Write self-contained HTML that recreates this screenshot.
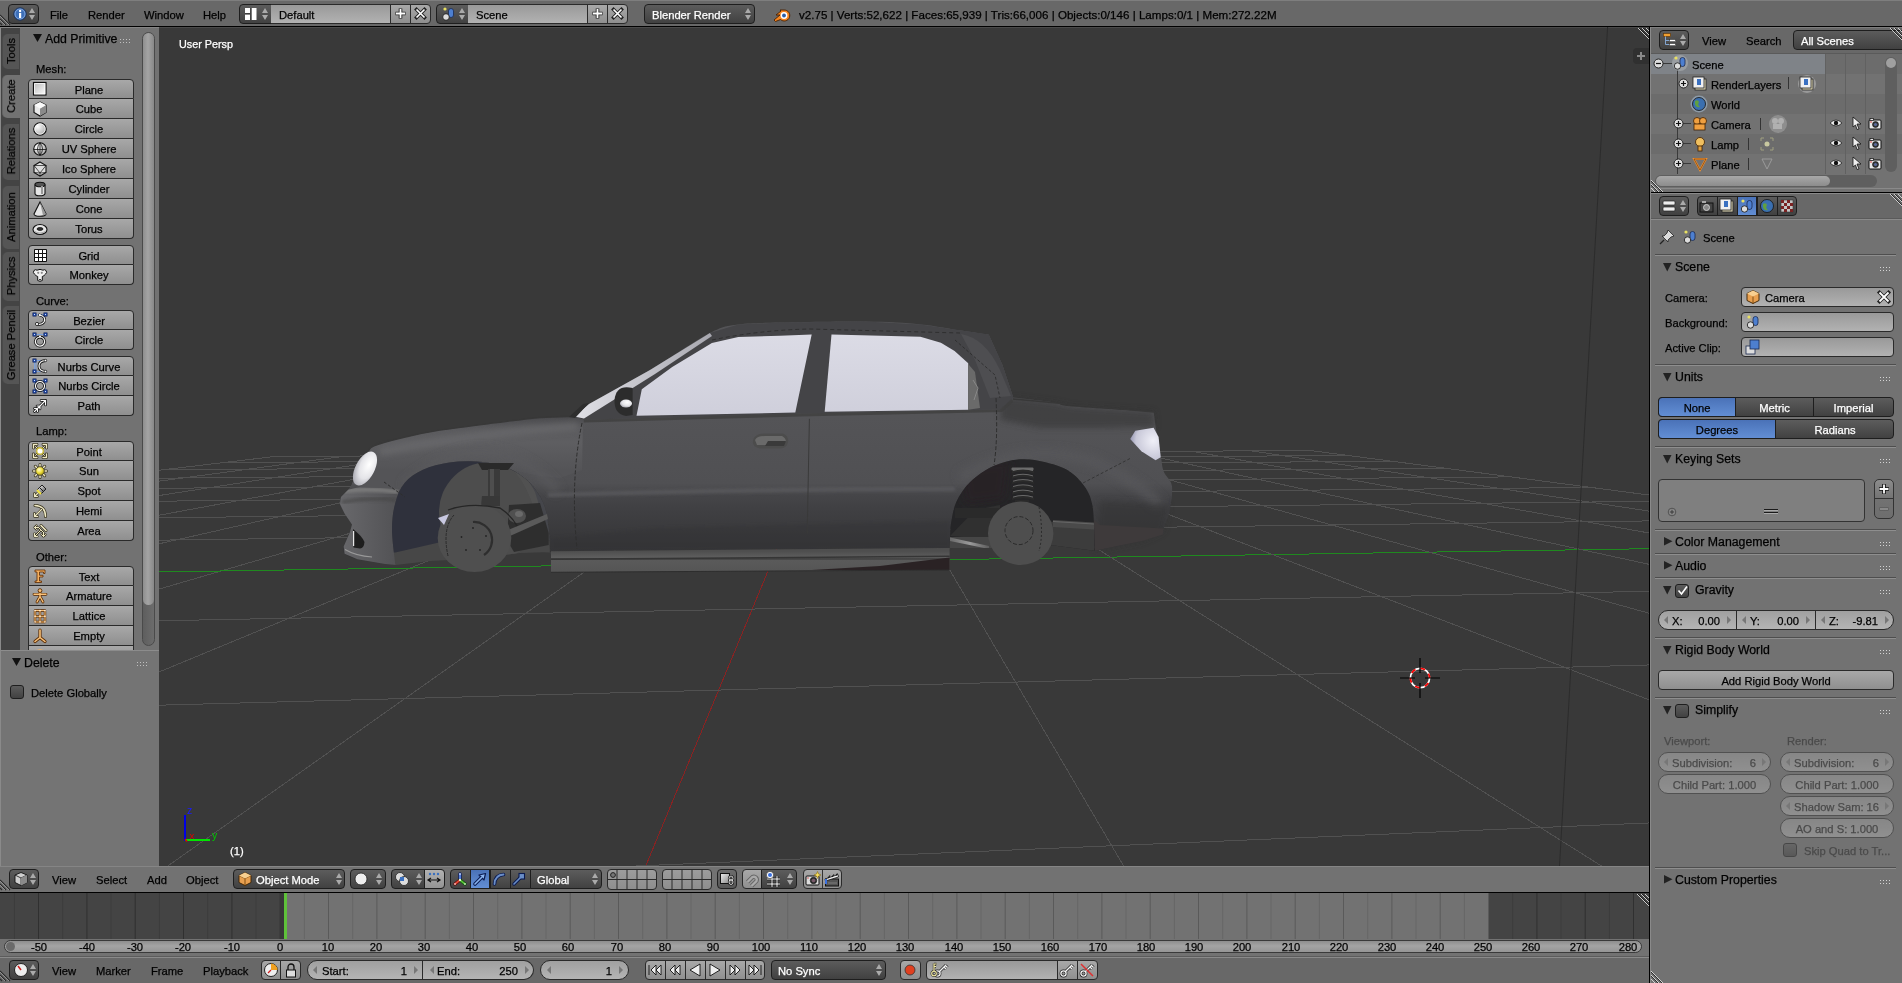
<!DOCTYPE html>
<html><head><meta charset="utf-8"><style>
html,body{margin:0;padding:0}
body{width:1902px;height:983px;overflow:hidden;position:relative;background:#727272;font-family:"Liberation Sans",sans-serif;font-size:11.2px;color:#000}
div{position:absolute;box-sizing:border-box}
svg{position:absolute;overflow:visible}
.t{white-space:nowrap;will-change:transform;-webkit-text-stroke:0.25px currentColor}
.c{text-align:center}
.r{text-align:right}
.w{color:#fff}
.tool{background:linear-gradient(#a8a8a8,#8f8f8f);border:1px solid #2a2a2a}
.menu{background:linear-gradient(#5c5c5c,#414141);border:1px solid #1e1e1e;border-radius:4px;color:#fff}
.tfield{background:linear-gradient(#999999,#b2b2b2);border:1px solid #2a2a2a}
.num{background:linear-gradient(#a0a0a0,#b4b4b4);border:1px solid #2a2a2a}
.radio{background:linear-gradient(#5c5c5c,#414141);border:1px solid #1e1e1e;color:#fff}
.rsel{background:linear-gradient(#4a72b8,#628ed4);border:1px solid #1e1e1e;color:#000}
.chk{background:linear-gradient(#5c5c5c,#414141);border:1px solid #1e1e1e;border-radius:3px}
.ptitle{font-size:12.3px}
</style></head><body><div style="left:0px;top:0px;width:1902px;height:26px;background:#686868"></div>
<div style="left:0px;top:0px;width:1902px;height:1px;background:#7e7e7e"></div>
<div style="left:0px;top:26px;width:1902px;height:1px;background:#000"></div>
<svg style="left:0px;top:13px" width="14" height="14"><path d="M0 2 L10 12 M0 6 L6 12 M0 10 L2 12" stroke="#2a2a2a" stroke-width="1.2"/><path d="M0 3 L9 12 M0 7 L5 12" stroke="#a0a0a0" stroke-width="0.8"/></svg>
<div class="menu" style="left:8px;top:4px;width:31px;height:20px;border-radius:4px"></div>
<svg style="left:13px;top:7px" width="14" height="14"><circle cx="7" cy="7" r="6.2" fill="#3d6fb8" stroke="#1b2f55" stroke-width="1"/><circle cx="7" cy="7" r="5" fill="none" stroke="#8fb2e6" stroke-width="0.8"/><rect x="6" y="6" width="2.2" height="5" fill="#fff"/><circle cx="7.1" cy="4" r="1.2" fill="#fff"/></svg>
<svg style="left:28px;top:7px" width="8" height="14"><path d="M1 6 L4 1 L7 6Z M1 8 L4 13 L7 8Z" fill="#aaaaaa"/></svg>
<div class="t" style="left:50px;top:5px;height:20px;line-height:20px;">File</div>
<div class="t" style="left:88px;top:5px;height:20px;line-height:20px;">Render</div>
<div class="t" style="left:144px;top:5px;height:20px;line-height:20px;">Window</div>
<div class="t" style="left:203px;top:5px;height:20px;line-height:20px;">Help</div>
<div class="menu" style="left:239px;top:4px;width:33px;height:20px;border-radius:4px 0 0 4px"></div>
<svg style="left:244px;top:7px" width="14" height="14"><rect x="1" y="1" width="5" height="5" fill="#fff"/><rect x="1" y="7.5" width="5" height="5.5" fill="#fff"/><rect x="7.5" y="1" width="5" height="12" fill="#fff"/><path d="M1 6.8 H6 M7 1 V13" stroke="#333" stroke-width="0.8"/></svg>
<svg style="left:261px;top:7px" width="8" height="14"><path d="M1 6 L4 1 L7 6Z M1 8 L4 13 L7 8Z" fill="#aaaaaa"/></svg>
<div class="tfield" style="left:271px;top:4px;width:120px;height:20px;border-left:none;border-radius:0"></div>
<div class="t" style="left:279px;top:5px;height:20px;line-height:20px;">Default</div>
<div class="tool" style="left:390px;top:4px;width:21px;height:20px;border-radius:0"></div>
<svg style="left:394px;top:7px" width="13" height="13"><path d="M6.5 1.5 V11.5 M1.5 6.5 H11.5" stroke="#222" stroke-width="3.6"/><path d="M6.5 2 V11 M2 6.5 H11" stroke="#fff" stroke-width="1.8"/></svg>
<div class="tool" style="left:410px;top:4px;width:21px;height:20px;border-radius:0 4px 4px 0"></div>
<svg style="left:414px;top:7px" width="13" height="13"><path d="M2.5 2.5 L10.5 10.5 M10.5 2.5 L2.5 10.5" stroke="#222" stroke-width="3.4" stroke-linecap="square"/><path d="M2.5 2.5 L10.5 10.5 M10.5 2.5 L2.5 10.5" stroke="#fff" stroke-width="1.7"/></svg>
<div class="menu" style="left:436px;top:4px;width:33px;height:20px;border-radius:4px 0 0 4px"></div>
<svg style="left:441px;top:6px" width="16" height="16"><rect x="7.5" y="2.5" width="5" height="9" rx="2.5" fill="#4d7fd0" stroke="#1a2a50" stroke-width="0.8"/><circle cx="5" cy="11" r="3.3" fill="#ddd" stroke="#111" stroke-width="0.8"/><circle cx="4" cy="3" r="1.6" fill="#e8e060"/></svg>
<svg style="left:458px;top:7px" width="8" height="14"><path d="M1 6 L4 1 L7 6Z M1 8 L4 13 L7 8Z" fill="#aaaaaa"/></svg>
<div class="tfield" style="left:468px;top:4px;width:120px;height:20px;border-left:none;border-radius:0"></div>
<div class="t" style="left:476px;top:5px;height:20px;line-height:20px;">Scene</div>
<div class="tool" style="left:587px;top:4px;width:21px;height:20px;border-radius:0"></div>
<svg style="left:591px;top:7px" width="13" height="13"><path d="M6.5 1.5 V11.5 M1.5 6.5 H11.5" stroke="#222" stroke-width="3.6"/><path d="M6.5 2 V11 M2 6.5 H11" stroke="#fff" stroke-width="1.8"/></svg>
<div class="tool" style="left:607px;top:4px;width:21px;height:20px;border-radius:0 4px 4px 0"></div>
<svg style="left:611px;top:7px" width="13" height="13"><path d="M2.5 2.5 L10.5 10.5 M10.5 2.5 L2.5 10.5" stroke="#222" stroke-width="3.4" stroke-linecap="square"/><path d="M2.5 2.5 L10.5 10.5 M10.5 2.5 L2.5 10.5" stroke="#fff" stroke-width="1.7"/></svg>
<div class="menu" style="left:644px;top:4px;width:111px;height:20px;"></div>
<div class="t w" style="left:652px;top:5px;height:20px;line-height:20px;">Blender Render</div>
<svg style="left:744px;top:7px" width="8" height="14"><path d="M1 6 L4 1 L7 6Z M1 8 L4 13 L7 8Z" fill="#aaaaaa"/></svg>
<svg style="left:772px;top:5px" width="18" height="18"><path d="M2 15 L8 10 L4 10 L9 6 L8 5 L12 5 A5.5 5.5 0 1 1 8.5 14.5 L3.5 16.5 Z" fill="#f5841f" stroke="#4a2000" stroke-width="0.9" stroke-linejoin="round"/><circle cx="12" cy="10.5" r="3.4" fill="#fff"/><circle cx="12" cy="10.5" r="1.9" fill="#2a5da8"/></svg>
<div class="t" style="left:799px;top:5px;height:20px;line-height:20px;font-size:11.6px">v2.75 | Verts:52,622 | Faces:65,939 | Tris:66,006 | Objects:0/146 | Lamps:0/1 | Mem:272.22M</div>
<div style="left:0px;top:27px;width:159px;height:839px;background:#727272"></div>
<div style="left:0px;top:27px;width:20px;height:623px;background:#444444"></div>
<div style="left:0px;top:27px;width:1px;height:839px;background:#8a8a8a"></div>
<div style="left:0px;top:27px;width:159px;height:1px;background:#858585"></div>
<div style="left:2px;top:33.5px;width:17px;height:35.5px;background:#555555;border-radius:5px 0 0 5px;box-shadow:inset 1px 0 0 rgba(0,0,0,0.12)"></div>
<div class="t" style="left:11px;top:50.75px;transform:translate(-50%,-50%) rotate(-90deg);line-height:12px">Tools</div>
<div style="left:2px;top:74.5px;width:18px;height:43.5px;background:#727272;border-radius:5px 0 0 5px;box-shadow:inset 1px 0 0 rgba(0,0,0,0.12)"></div>
<div class="t" style="left:11px;top:95.75px;transform:translate(-50%,-50%) rotate(-90deg);line-height:12px">Create</div>
<div style="left:2px;top:123.5px;width:17px;height:56.5px;background:#555555;border-radius:5px 0 0 5px;box-shadow:inset 1px 0 0 rgba(0,0,0,0.12)"></div>
<div class="t" style="left:11px;top:151.25px;transform:translate(-50%,-50%) rotate(-90deg);line-height:12px">Relations</div>
<div style="left:2px;top:185.5px;width:17px;height:63.5px;background:#555555;border-radius:5px 0 0 5px;box-shadow:inset 1px 0 0 rgba(0,0,0,0.12)"></div>
<div class="t" style="left:11px;top:216.75px;transform:translate(-50%,-50%) rotate(-90deg);line-height:12px">Animation</div>
<div style="left:2px;top:252px;width:17px;height:48.5px;background:#555555;border-radius:5px 0 0 5px;box-shadow:inset 1px 0 0 rgba(0,0,0,0.12)"></div>
<div class="t" style="left:11px;top:275.75px;transform:translate(-50%,-50%) rotate(-90deg);line-height:12px">Physics</div>
<div style="left:2px;top:306px;width:17px;height:78px;background:#555555;border-radius:5px 0 0 5px;box-shadow:inset 1px 0 0 rgba(0,0,0,0.12)"></div>
<div class="t" style="left:11px;top:344.5px;transform:translate(-50%,-50%) rotate(-90deg);line-height:12px">Grease Pencil</div>
<svg style="left:33px;top:34px" width="10" height="9"><path d="M0 0 H9 L4.5 8Z" fill="#111"/></svg>
<div class="t ptitle" style="left:45px;top:31px;height:16px;line-height:16px;">Add Primitive</div>
<svg style="left:120px;top:39px" width="12" height="6"><rect x="0" y="0" width="1" height="1" fill="#c0c0c0"/><rect x="0" y="3" width="1" height="1" fill="#c0c0c0"/><rect x="3" y="0" width="1" height="1" fill="#c0c0c0"/><rect x="3" y="3" width="1" height="1" fill="#c0c0c0"/><rect x="6" y="0" width="1" height="1" fill="#c0c0c0"/><rect x="6" y="3" width="1" height="1" fill="#c0c0c0"/><rect x="9" y="0" width="1" height="1" fill="#c0c0c0"/><rect x="9" y="3" width="1" height="1" fill="#c0c0c0"/></svg>
<div style="left:142px;top:32px;width:13px;height:614px;background:linear-gradient(90deg,#5e5e5e,#6c6c6c);border:1px solid #4a4a4a;border-radius:6.5px"></div>
<div style="left:143px;top:33px;width:11px;height:572px;background:linear-gradient(90deg,#8e8e8e,#a4a4a4 45%,#888888);border-radius:5.5px"></div>
<div class="t" style="left:36px;top:62px;height:14px;line-height:14px;">Mesh:</div>
<div class="tool" style="left:28px;top:79px;width:106px;height:20px;border-radius:4px 4px 0 0;"></div>
<svg style="left:32px;top:81px" width="16" height="16"><defs><linearGradient id="gpl" x1="0" y1="0" x2="1" y2="1"><stop offset="0" stop-color="#b8b8b8"/><stop offset="1" stop-color="#ffffff"/></linearGradient></defs><rect x="1.5" y="1.5" width="12.5" height="12.5" fill="url(#gpl)" stroke="#111" stroke-width="1.2"/><rect x="2.6" y="2.6" width="10.3" height="10.3" fill="none" stroke="#fff" stroke-width="0.8"/></svg>
<div class="t c" style="left:44px;top:80px;width:90px;height:20px;line-height:20px;">Plane</div>
<div class="tool" style="left:28px;top:99px;width:106px;height:20px;border-radius:0 0 0 0;border-top:none;"></div>
<svg style="left:32px;top:101px" width="16" height="16"><path d="M8 1 L14 4 L14 11.5 L8 15 L2 11.5 L2 4 Z" fill="#e8e8e8" stroke="#111" stroke-width="1.1"/><path d="M8 7.5 L14 4 L14 11.5 L8 15 Z" fill="#8a8a8a"/><path d="M2 4 L8 1 L14 4 L8 7.5Z" fill="#fafafa"/></svg>
<div class="t c" style="left:44px;top:99px;width:90px;height:20px;line-height:20px;">Cube</div>
<div class="tool" style="left:28px;top:119px;width:106px;height:20px;border-radius:0 0 0 0;border-top:none;"></div>
<svg style="left:32px;top:121px" width="16" height="16"><defs><radialGradient id="gci" cx="0.3" cy="0.3" r="0.8"><stop offset="0" stop-color="#fff"/><stop offset="1" stop-color="#a8a8a8"/></radialGradient></defs><circle cx="8" cy="8" r="6.3" fill="url(#gci)" stroke="#111" stroke-width="1.1"/><circle cx="8" cy="8" r="5.2" fill="none" stroke="#fff" stroke-width="0.7"/></svg>
<div class="t c" style="left:44px;top:119px;width:90px;height:20px;line-height:20px;">Circle</div>
<div class="tool" style="left:28px;top:139px;width:106px;height:20px;border-radius:0 0 0 0;border-top:none;"></div>
<svg style="left:32px;top:141px" width="16" height="16"><circle cx="8" cy="8" r="6.3" fill="url(#gci)" stroke="#111" stroke-width="1.1"/><path d="M8 1.7 V14.3 M1.7 8.5 H14.3 M8 1.7 Q3 8 8 14.3 M8 1.7 Q13 8 8 14.3" fill="none" stroke="#111" stroke-width="0.8"/></svg>
<div class="t c" style="left:44px;top:139px;width:90px;height:20px;line-height:20px;">UV Sphere</div>
<div class="tool" style="left:28px;top:159px;width:106px;height:20px;border-radius:0 0 0 0;border-top:none;"></div>
<svg style="left:32px;top:161px" width="16" height="16"><path d="M8 1 L14 4.5 L14 11.5 L8 15 L2 11.5 L2 4.5 Z" fill="#ddd" stroke="#111" stroke-width="1.1"/><path d="M2 4.5 L14 4.5 L8 12 Z M8 12 L8 15 M2 11.5 L8 12 L14 11.5" fill="none" stroke="#111" stroke-width="0.7"/></svg>
<div class="t c" style="left:44px;top:159px;width:90px;height:20px;line-height:20px;">Ico Sphere</div>
<div class="tool" style="left:28px;top:179px;width:106px;height:20px;border-radius:0 0 0 0;border-top:none;"></div>
<svg style="left:32px;top:181px" width="16" height="16"><path d="M3 3.5 V12.5 A5 2.3 0 0 0 13 12.5 V3.5" fill="#e4e4e4" stroke="#111" stroke-width="1.1"/><ellipse cx="8" cy="3.5" rx="5" ry="2.3" fill="#555" stroke="#111" stroke-width="1.1"/><path d="M10 5 V13" stroke="#999" stroke-width="2"/></svg>
<div class="t c" style="left:44px;top:179px;width:90px;height:20px;line-height:20px;">Cylinder</div>
<div class="tool" style="left:28px;top:199px;width:106px;height:20px;border-radius:0 0 0 0;border-top:none;"></div>
<svg style="left:32px;top:201px" width="16" height="16"><path d="M8 1 L14 13 A6 2.3 0 0 1 2 13 Z" fill="#e4e4e4" stroke="#111" stroke-width="1.1"/><path d="M8 1 L11 14.5 A6 2.3 0 0 0 14 13Z" fill="#999"/></svg>
<div class="t c" style="left:44px;top:199px;width:90px;height:20px;line-height:20px;">Cone</div>
<div class="tool" style="left:28px;top:219px;width:106px;height:20px;border-radius:0 0 4px 4px;border-top:none;"></div>
<svg style="left:32px;top:221px" width="16" height="16"><ellipse cx="8" cy="8.5" rx="7" ry="5" fill="#e8e8e8" stroke="#111" stroke-width="1.1"/><ellipse cx="8" cy="8" rx="3" ry="1.4" fill="#333" stroke="#111" stroke-width="0.8"/><path d="M2 10 Q8 14 14 10" stroke="#aaa" stroke-width="1" fill="none"/></svg>
<div class="t c" style="left:44px;top:219px;width:90px;height:20px;line-height:20px;">Torus</div>
<div class="tool" style="left:28px;top:245px;width:106px;height:20px;border-radius:4px 4px 0 0;"></div>
<svg style="left:32px;top:247px" width="16" height="16"><rect x="2" y="2" width="13" height="13" fill="#111" rx="1"/><rect x="3" y="3" width="3" height="3" fill="#fff"/><rect x="7" y="3" width="3" height="3" fill="#fff"/><rect x="11" y="3" width="3" height="3" fill="#fff"/><rect x="3" y="7" width="3" height="3" fill="#fff"/><rect x="7" y="7" width="3" height="3" fill="#fff"/><rect x="11" y="7" width="3" height="3" fill="#fff"/><rect x="3" y="11" width="3" height="3" fill="#fff"/><rect x="7" y="11" width="3" height="3" fill="#fff"/><rect x="11" y="11" width="3" height="3" fill="#fff"/></svg>
<div class="t c" style="left:44px;top:246px;width:90px;height:20px;line-height:20px;">Grid</div>
<div class="tool" style="left:28px;top:265px;width:106px;height:20px;border-radius:0 0 4px 4px;border-top:none;"></div>
<svg style="left:32px;top:267px" width="16" height="16"><path d="M5 3.2 Q8 1.5 11 3.2 Q12.5 2 14 3.5 Q15.5 5.5 13.5 7.2 Q12 9 10.3 9.5 L10.3 13.5 Q8 15.2 5.7 13.5 L5.7 9.5 Q4 9 2.5 7.2 Q0.5 5.5 2 3.5 Q3.5 2 5 3.2Z" fill="#f0f0f0" stroke="#111" stroke-width="1"/><circle cx="6.2" cy="5.8" r="1.1" fill="#888"/><circle cx="9.8" cy="5.8" r="1.1" fill="#888"/><ellipse cx="8" cy="12.6" rx="1.2" ry="0.7" fill="#111"/></svg>
<div class="t c" style="left:44px;top:265px;width:90px;height:20px;line-height:20px;">Monkey</div>
<div class="t" style="left:36px;top:294px;height:14px;line-height:14px;">Curve:</div>
<div class="tool" style="left:28px;top:310px;width:106px;height:20px;border-radius:4px 4px 0 0;"></div>
<svg style="left:32px;top:312px" width="16" height="16"><path d="M2.5 2.5 H13.5" stroke="#7aa0e0" stroke-width="0.9" fill="none"/><path d="M7.5 3 Q14.5 4.5 12 10 Q10 13 5.5 12.2" stroke="#111" stroke-width="2.8" fill="none" stroke-linecap="round"/><path d="M7.5 3 Q14.5 4.5 12 10 Q10 13 5.5 12.2" stroke="#fafafa" stroke-width="1.2" fill="none" stroke-linecap="round"/><circle cx="5" cy="12" r="1.6" fill="#fff" stroke="#111" stroke-width="0.8"/><rect x="0.8999999999999999" y="0.8999999999999999" width="3.2" height="3.2" fill="#2a56b8" stroke="#0a1a50" stroke-width="0.7"/><rect x="2.0" y="2.0" width="1" height="1" fill="#cfe0ff"/><rect x="11.9" y="0.8999999999999999" width="3.2" height="3.2" fill="#2a56b8" stroke="#0a1a50" stroke-width="0.7"/><rect x="13.0" y="2.0" width="1" height="1" fill="#cfe0ff"/><circle cx="7.8" cy="3" r="1.1" fill="#fff"/></svg>
<div class="t c" style="left:44px;top:311px;width:90px;height:20px;line-height:20px;">Bezier</div>
<div class="tool" style="left:28px;top:330px;width:106px;height:20px;border-radius:0 0 4px 4px;border-top:none;"></div>
<svg style="left:32px;top:332px" width="16" height="16"><path d="M2.5 2.5 H13.5" stroke="#7aa0e0" stroke-width="0.9" fill="none"/><path d="M8 5 A4.6 4.6 0 1 1 7.99 5Z" stroke="#111" stroke-width="2.8" fill="none" stroke-linecap="round"/><path d="M8 5 A4.6 4.6 0 1 1 7.99 5Z" stroke="#fafafa" stroke-width="1.2" fill="none" stroke-linecap="round"/><rect x="0.8999999999999999" y="0.8999999999999999" width="3.2" height="3.2" fill="#2a56b8" stroke="#0a1a50" stroke-width="0.7"/><rect x="2.0" y="2.0" width="1" height="1" fill="#cfe0ff"/><rect x="11.9" y="0.8999999999999999" width="3.2" height="3.2" fill="#2a56b8" stroke="#0a1a50" stroke-width="0.7"/><rect x="13.0" y="2.0" width="1" height="1" fill="#cfe0ff"/><circle cx="8" cy="4.6" r="1" fill="#fff"/></svg>
<div class="t c" style="left:44px;top:330px;width:90px;height:20px;line-height:20px;">Circle</div>
<div class="tool" style="left:28px;top:356px;width:106px;height:20px;border-radius:4px 4px 0 0;"></div>
<svg style="left:32px;top:358px" width="16" height="16"><path d="M2.5 2.5 H9 M2.5 13.5 H9 M2.5 2.5 V13.5 M4 2.5 V13.5" stroke="#7aa0e0" stroke-width="0.9" fill="none"/><path d="M13.5 2.5 Q7 3 7 8 Q7 13 13.5 13.5" stroke="#111" stroke-width="2.8" fill="none" stroke-linecap="round"/><path d="M13.5 2.5 Q7 3 7 8 Q7 13 13.5 13.5" stroke="#fafafa" stroke-width="1.2" fill="none" stroke-linecap="round"/><circle cx="13.5" cy="2.5" r="1.2" fill="#fff" stroke="#111" stroke-width="0.6"/><circle cx="13.5" cy="13.5" r="1.2" fill="#fff" stroke="#111" stroke-width="0.6"/><rect x="0.8999999999999999" y="0.8999999999999999" width="3.2" height="3.2" fill="#2a56b8" stroke="#0a1a50" stroke-width="0.7"/><rect x="2.0" y="2.0" width="1" height="1" fill="#cfe0ff"/><rect x="0.8999999999999999" y="11.9" width="3.2" height="3.2" fill="#2a56b8" stroke="#0a1a50" stroke-width="0.7"/><rect x="2.0" y="13.0" width="1" height="1" fill="#cfe0ff"/></svg>
<div class="t c" style="left:44px;top:357px;width:90px;height:20px;line-height:20px;">Nurbs Curve</div>
<div class="tool" style="left:28px;top:376px;width:106px;height:20px;border-radius:0 0 0 0;border-top:none;"></div>
<svg style="left:32px;top:378px" width="16" height="16"><path d="M2.5 2.5 H13.5 V13.5 H2.5Z" stroke="#7aa0e0" stroke-width="0.9" fill="none"/><path d="M8 3.4 A4.6 4.6 0 1 1 7.99 3.4Z" stroke="#111" stroke-width="2.8" fill="none" stroke-linecap="round"/><path d="M8 3.4 A4.6 4.6 0 1 1 7.99 3.4Z" stroke="#fafafa" stroke-width="1.2" fill="none" stroke-linecap="round"/><rect x="0.8999999999999999" y="0.8999999999999999" width="3.2" height="3.2" fill="#2a56b8" stroke="#0a1a50" stroke-width="0.7"/><rect x="2.0" y="2.0" width="1" height="1" fill="#cfe0ff"/><rect x="11.9" y="0.8999999999999999" width="3.2" height="3.2" fill="#2a56b8" stroke="#0a1a50" stroke-width="0.7"/><rect x="13.0" y="2.0" width="1" height="1" fill="#cfe0ff"/><rect x="0.8999999999999999" y="11.9" width="3.2" height="3.2" fill="#2a56b8" stroke="#0a1a50" stroke-width="0.7"/><rect x="2.0" y="13.0" width="1" height="1" fill="#cfe0ff"/><rect x="11.9" y="11.9" width="3.2" height="3.2" fill="#2a56b8" stroke="#0a1a50" stroke-width="0.7"/><rect x="13.0" y="13.0" width="1" height="1" fill="#cfe0ff"/></svg>
<div class="t c" style="left:44px;top:376px;width:90px;height:20px;line-height:20px;">Nurbs Circle</div>
<div class="tool" style="left:28px;top:396px;width:106px;height:20px;border-radius:0 0 4px 4px;border-top:none;"></div>
<svg style="left:32px;top:398px" width="16" height="16"><path d="M2.5 13.5 L13.5 2.5 M9 2.5 H13.5 V7 M2.5 10.5 L5.5 10.5 L5.5 13.5 M5 8 L8 8 L8 11" stroke="#111" stroke-width="2.6" fill="none" stroke-linecap="round"/><path d="M2.5 13.5 L13.5 2.5 M9 2.5 H13.5 V7 M2.5 10.5 L5.5 10.5 L5.5 13.5 M5 8 L8 8 L8 11" stroke="#fafafa" stroke-width="1.1" fill="none" stroke-linecap="round"/></svg>
<div class="t c" style="left:44px;top:396px;width:90px;height:20px;line-height:20px;">Path</div>
<div class="t" style="left:36px;top:424px;height:14px;line-height:14px;">Lamp:</div>
<div class="tool" style="left:28px;top:441px;width:106px;height:20px;border-radius:4px 4px 0 0;"></div>
<svg style="left:32px;top:443px" width="16" height="16"><path d="M1.5 5 V1.5 H5 M11 1.5 H14.5 V5 M14.5 11 V14.5 H11 M5 14.5 H1.5 V11" stroke="#3a3520" stroke-width="2.8" fill="none" stroke-linecap="round" stroke-linejoin="round"/><path d="M1.5 5 V1.5 H5 M11 1.5 H14.5 V5 M14.5 11 V14.5 H11 M5 14.5 H1.5 V11" stroke="#efe9c4" stroke-width="1.3" fill="none" stroke-linecap="round" stroke-linejoin="round"/><path d="M3.5 3.5 L5.5 5.5 M12.5 3.5 L10.5 5.5 M3.5 12.5 L5.5 10.5 M12.5 12.5 L10.5 10.5" stroke="#3a3520" stroke-width="2.2" fill="none" stroke-linecap="round" stroke-linejoin="round"/><path d="M3.5 3.5 L5.5 5.5 M12.5 3.5 L10.5 5.5 M3.5 12.5 L5.5 10.5 M12.5 12.5 L10.5 10.5" stroke="#efe9c4" stroke-width="1.0" fill="none" stroke-linecap="round" stroke-linejoin="round"/><circle cx="8" cy="8" r="3.3" fill="#fff" stroke="#c8b838" stroke-width="1.4"/></svg>
<div class="t c" style="left:44px;top:442px;width:90px;height:20px;line-height:20px;">Point</div>
<div class="tool" style="left:28px;top:461px;width:106px;height:20px;border-radius:0 0 0 0;border-top:none;"></div>
<svg style="left:32px;top:463px" width="16" height="16"><path d="M12.2 8.0 L14.6 8.0 M11.0 11.0 L12.7 12.7 M8.0 12.2 L8.0 14.6 M5.0 11.0 L3.3 12.7 M3.8 8.0 L1.4 8.0 M5.0 5.0 L3.3 3.3 M8.0 3.8 L8.0 1.4 M11.0 5.0 L12.7 3.3 " stroke="#3a3520" stroke-width="3.0" fill="none" stroke-linecap="round" stroke-linejoin="round"/><path d="M12.2 8.0 L14.6 8.0 M11.0 11.0 L12.7 12.7 M8.0 12.2 L8.0 14.6 M5.0 11.0 L3.3 12.7 M3.8 8.0 L1.4 8.0 M5.0 5.0 L3.3 3.3 M8.0 3.8 L8.0 1.4 M11.0 5.0 L12.7 3.3 " stroke="#efe9c4" stroke-width="1.5" fill="none" stroke-linecap="round" stroke-linejoin="round"/><defs><radialGradient id="gsun" cx="0.4" cy="0.35" r="0.7"><stop offset="0" stop-color="#fffbd0"/><stop offset="0.5" stop-color="#f0e040"/><stop offset="1" stop-color="#a09010"/></radialGradient></defs><circle cx="8" cy="8" r="4.3" fill="url(#gsun)" stroke="#3a3520" stroke-width="0.8"/></svg>
<div class="t c" style="left:44px;top:461px;width:90px;height:20px;line-height:20px;">Sun</div>
<div class="tool" style="left:28px;top:481px;width:106px;height:20px;border-radius:0 0 0 0;border-top:none;"></div>
<svg style="left:32px;top:483px" width="16" height="16"><path d="M7 9 L2.5 13.5 M2.5 10.5 V13.5 H5.5" stroke="#3a3520" stroke-width="2.6" fill="none" stroke-linecap="round" stroke-linejoin="round"/><path d="M7 9 L2.5 13.5 M2.5 10.5 V13.5 H5.5" stroke="#efe9c4" stroke-width="1.2" fill="none" stroke-linecap="round" stroke-linejoin="round"/><defs><linearGradient id="gspot" x1="0" y1="0" x2="1" y2="1"><stop offset="0" stop-color="#f0f0f0"/><stop offset="1" stop-color="#555"/></linearGradient></defs><path d="M10 2 L14 6 L11.5 8.5 L7.5 4.5Z" fill="url(#gspot)" stroke="#111" stroke-width="0.9"/><path d="M7.5 4.5 L11.5 8.5 L9 11 L5 7Z" fill="url(#gspot)" stroke="#111" stroke-width="0.9"/><path d="M5 7 L9 11" stroke="#f0e040" stroke-width="2"/></svg>
<div class="t c" style="left:44px;top:481px;width:90px;height:20px;line-height:20px;">Spot</div>
<div class="tool" style="left:28px;top:501px;width:106px;height:20px;border-radius:0 0 0 0;border-top:none;"></div>
<svg style="left:32px;top:503px" width="16" height="16"><path d="M3 2.5 Q13.5 3 13.5 13.5" stroke="#3a3520" stroke-width="3.0" fill="none" stroke-linecap="round" stroke-linejoin="round"/><path d="M3 2.5 Q13.5 3 13.5 13.5" stroke="#efe9c4" stroke-width="1.5" fill="none" stroke-linecap="round" stroke-linejoin="round"/><path d="M9.5 6.5 L2.5 13.5 M2.5 10.2 V13.5 H5.8" stroke="#3a3520" stroke-width="2.4" fill="none" stroke-linecap="round" stroke-linejoin="round"/><path d="M9.5 6.5 L2.5 13.5 M2.5 10.2 V13.5 H5.8" stroke="#efe9c4" stroke-width="1.1" fill="none" stroke-linecap="round" stroke-linejoin="round"/></svg>
<div class="t c" style="left:44px;top:501px;width:90px;height:20px;line-height:20px;">Hemi</div>
<div class="tool" style="left:28px;top:521px;width:106px;height:20px;border-radius:0 0 4px 4px;border-top:none;"></div>
<svg style="left:32px;top:523px" width="16" height="16"><path d="M9 2.5 L14 7.5" stroke="#3a3520" stroke-width="3.0" fill="none" stroke-linecap="round" stroke-linejoin="round"/><path d="M9 2.5 L14 7.5" stroke="#efe9c4" stroke-width="1.6" fill="none" stroke-linecap="round" stroke-linejoin="round"/><path d="M8.5 7.5 L2.5 13.5 M2.5 10.5 V13.5 H5.5 M6.5 4.5 L2.5 4.5 M4.5 2.5 L2.5 4.5 L4.5 6.5 M11.5 9.5 V13.5 M9.5 11.5 L11.5 13.5 L13.5 11.5 M6.5 4.5 L11.5 9.5" stroke="#3a3520" stroke-width="2.2" fill="none" stroke-linecap="round" stroke-linejoin="round"/><path d="M8.5 7.5 L2.5 13.5 M2.5 10.5 V13.5 H5.5 M6.5 4.5 L2.5 4.5 M4.5 2.5 L2.5 4.5 L4.5 6.5 M11.5 9.5 V13.5 M9.5 11.5 L11.5 13.5 L13.5 11.5 M6.5 4.5 L11.5 9.5" stroke="#efe9c4" stroke-width="1.0" fill="none" stroke-linecap="round" stroke-linejoin="round"/></svg>
<div class="t c" style="left:44px;top:521px;width:90px;height:20px;line-height:20px;">Area</div>
<div class="t" style="left:36px;top:550px;height:14px;line-height:14px;">Other:</div>
<div class="tool" style="left:28px;top:566px;width:106px;height:20px;border-radius:4px 4px 0 0;"></div>
<svg style="left:32px;top:568px" width="16" height="16"><path d="M3 2 H13 V5.5 H11.5 V4 H7.5 V7.3 H11 V9 H7.5 V13 H9.5 V14.5 H3 V13 H5 V4 H3Z" fill="#f5b060" stroke="#5a2a00" stroke-width="0.8"/></svg>
<div class="t c" style="left:44px;top:567px;width:90px;height:20px;line-height:20px;">Text</div>
<div class="tool" style="left:28px;top:586px;width:106px;height:20px;border-radius:0 0 0 0;border-top:none;"></div>
<svg style="left:32px;top:588px" width="16" height="16"><path d="M2 6.3 H14 M8 4.5 V8.5 L5 14 M8 8.5 L11 14" stroke="#5a2a00" stroke-width="2.8" fill="none" stroke-linecap="round" stroke-linejoin="round"/><path d="M2 6.3 H14 M8 4.5 V8.5 L5 14 M8 8.5 L11 14" stroke="#f8c27a" stroke-width="1.4" fill="none" stroke-linecap="round" stroke-linejoin="round"/><circle cx="8" cy="2.6" r="1.9" fill="#f8c27a" stroke="#5a2a00" stroke-width="0.9"/></svg>
<div class="t c" style="left:44px;top:586px;width:90px;height:20px;line-height:20px;">Armature</div>
<div class="tool" style="left:28px;top:606px;width:106px;height:20px;border-radius:0 0 0 0;border-top:none;"></div>
<svg style="left:32px;top:608px" width="16" height="16"><path d="M3 2.5 H13 V14 H3Z M8 2.5 V14 M3 8.2 H13" stroke="#5a2a00" stroke-width="2.4" fill="none" stroke-linecap="round" stroke-linejoin="round"/><path d="M3 2.5 H13 V14 H3Z M8 2.5 V14 M3 8.2 H13" stroke="#f8c27a" stroke-width="1.1" fill="none" stroke-linecap="round" stroke-linejoin="round"/><circle cx="3" cy="2.5" r="0.7" fill="#fff"/><circle cx="3" cy="8.2" r="0.7" fill="#fff"/><circle cx="3" cy="14" r="0.7" fill="#fff"/><circle cx="8" cy="2.5" r="0.7" fill="#fff"/><circle cx="8" cy="8.2" r="0.7" fill="#fff"/><circle cx="8" cy="14" r="0.7" fill="#fff"/><circle cx="13" cy="2.5" r="0.7" fill="#fff"/><circle cx="13" cy="8.2" r="0.7" fill="#fff"/><circle cx="13" cy="14" r="0.7" fill="#fff"/></svg>
<div class="t c" style="left:44px;top:606px;width:90px;height:20px;line-height:20px;">Lattice</div>
<div class="tool" style="left:28px;top:626px;width:106px;height:20px;border-radius:0 0 0 0;border-top:none;"></div>
<svg style="left:32px;top:628px" width="16" height="16"><path d="M8 2 V9.5 L3 13.5 M8 9.5 L13 13.5" stroke="#5a2a00" stroke-width="3.2" fill="none" stroke-linecap="round" stroke-linejoin="round"/><path d="M8 2 V9.5 L3 13.5 M8 9.5 L13 13.5" stroke="#f8c27a" stroke-width="1.6" fill="none" stroke-linecap="round" stroke-linejoin="round"/></svg>
<div class="t c" style="left:44px;top:626px;width:90px;height:20px;line-height:20px;">Empty</div>
<div class="tool" style="left:28px;top:646px;width:106px;height:20px;border-radius:0 0 4px 4px;border-top:none;"></div>
<svg style="left:32px;top:648px" width="16" height="16"><path d="M3 3 L8 2 L13 3" stroke="#f5b060" stroke-width="1.5" fill="none"/></svg>
<div class="t c" style="left:44px;top:646px;width:90px;height:20px;line-height:20px;"></div>
<div style="left:0px;top:650px;width:159px;height:216px;background:#747474"></div>
<div style="left:0px;top:650px;width:159px;height:1px;background:#8c8c8c"></div>
<div style="left:0px;top:650px;width:1px;height:216px;background:#8a8a8a"></div>
<svg style="left:12px;top:658px" width="10" height="9"><path d="M0 0 H9 L4.5 8Z" fill="#111"/></svg>
<div class="t ptitle" style="left:24px;top:655px;height:16px;line-height:16px;">Delete</div>
<svg style="left:137px;top:662px" width="12" height="6"><rect x="0" y="0" width="1" height="1" fill="#c0c0c0"/><rect x="0" y="3" width="1" height="1" fill="#c0c0c0"/><rect x="3" y="0" width="1" height="1" fill="#c0c0c0"/><rect x="3" y="3" width="1" height="1" fill="#c0c0c0"/><rect x="6" y="0" width="1" height="1" fill="#c0c0c0"/><rect x="6" y="3" width="1" height="1" fill="#c0c0c0"/><rect x="9" y="0" width="1" height="1" fill="#c0c0c0"/><rect x="9" y="3" width="1" height="1" fill="#c0c0c0"/></svg>
<div class="chk" style="left:10px;top:685px;width:14px;height:14px;"></div>
<div class="t" style="left:31px;top:686px;height:15px;line-height:15px;">Delete Globally</div>
<div style="left:159px;top:27px;width:1490px;height:839px;background:#393939;overflow:hidden"></div>
<div style="left:159px;top:27px;width:1490px;height:1px;background:#4a4a4a"></div>
<svg style="left:0;top:0" width="1902" height="983"><defs><clipPath id="vclip"><rect x="159" y="27" width="1490" height="839"/></clipPath></defs><g clip-path="url(#vclip)"><line x1="274.7" y1="456.5" x2="1310.4" y2="450.5" stroke="#515151" stroke-width="1" shape-rendering="crispEdges"/><line x1="274.7" y1="456.5" x2="-136307.8" y2="16657.2" stroke="#515151" stroke-width="1" shape-rendering="crispEdges"/><line x1="223.5" y1="462.6" x2="1348.3" y2="455.5" stroke="#515151" stroke-width="1" shape-rendering="crispEdges"/><line x1="345.3" y1="456.1" x2="-120006.8" y2="16657.2" stroke="#515151" stroke-width="1" shape-rendering="crispEdges"/><line x1="162.3" y1="469.8" x2="1393.0" y2="461.3" stroke="#515151" stroke-width="1" shape-rendering="crispEdges"/><line x1="415.1" y1="455.7" x2="-103705.9" y2="16657.2" stroke="#515151" stroke-width="1" shape-rendering="crispEdges"/><line x1="87.6" y1="478.7" x2="1446.3" y2="468.3" stroke="#515151" stroke-width="1" shape-rendering="crispEdges"/><line x1="484.1" y1="455.3" x2="-87404.9" y2="16657.2" stroke="#515151" stroke-width="1" shape-rendering="crispEdges"/><line x1="-5.4" y1="489.7" x2="1511.0" y2="476.9" stroke="#515151" stroke-width="1" shape-rendering="crispEdges"/><line x1="552.2" y1="454.9" x2="-71103.9" y2="16657.2" stroke="#515151" stroke-width="1" shape-rendering="crispEdges"/><line x1="-124.6" y1="503.9" x2="1591.3" y2="487.4" stroke="#515151" stroke-width="1" shape-rendering="crispEdges"/><line x1="619.5" y1="454.5" x2="-54802.9" y2="16657.2" stroke="#515151" stroke-width="1" shape-rendering="crispEdges"/><line x1="-282.8" y1="522.6" x2="1693.6" y2="500.9" stroke="#515151" stroke-width="1" shape-rendering="crispEdges"/><line x1="686.0" y1="454.1" x2="-38502.0" y2="16657.2" stroke="#515151" stroke-width="1" shape-rendering="crispEdges"/><line x1="-502.7" y1="548.7" x2="1828.3" y2="518.6" stroke="#515151" stroke-width="1" shape-rendering="crispEdges"/><line x1="751.8" y1="453.7" x2="-22201.0" y2="16657.2" stroke="#515151" stroke-width="1" shape-rendering="crispEdges"/><line x1="-829.3" y1="587.4" x2="2013.8" y2="543.0" stroke="#1f8a1f" stroke-width="1" shape-rendering="crispEdges"/><line x1="816.8" y1="453.3" x2="-5900.0" y2="16657.2" stroke="#8a2222" stroke-width="1" shape-rendering="crispEdges"/><line x1="-1365.3" y1="651.0" x2="2285.3" y2="578.7" stroke="#515151" stroke-width="1" shape-rendering="crispEdges"/><line x1="881.0" y1="453.0" x2="10400.9" y2="16657.2" stroke="#515151" stroke-width="1" shape-rendering="crispEdges"/><line x1="-2406.6" y1="774.5" x2="2720.8" y2="636.0" stroke="#515151" stroke-width="1" shape-rendering="crispEdges"/><line x1="944.4" y1="452.6" x2="26701.9" y2="16657.2" stroke="#515151" stroke-width="1" shape-rendering="crispEdges"/><line x1="-5305.4" y1="1118.4" x2="3533.2" y2="742.9" stroke="#515151" stroke-width="1" shape-rendering="crispEdges"/><line x1="1007.2" y1="452.2" x2="43002.9" y2="16657.2" stroke="#515151" stroke-width="1" shape-rendering="crispEdges"/><line x1="-56064.5" y1="7139.1" x2="5585.3" y2="1012.8" stroke="#515151" stroke-width="1" shape-rendering="crispEdges"/><line x1="1069.2" y1="451.9" x2="59303.9" y2="16657.2" stroke="#515151" stroke-width="1" shape-rendering="crispEdges"/><line x1="67383.3" y1="16657.2" x2="20840.5" y2="3019.7" stroke="#515151" stroke-width="1" shape-rendering="crispEdges"/><line x1="1130.5" y1="451.5" x2="75604.8" y2="16657.2" stroke="#515151" stroke-width="1" shape-rendering="crispEdges"/><line x1="1191.2" y1="451.2" x2="91905.8" y2="16657.2" stroke="#515151" stroke-width="1" shape-rendering="crispEdges"/><line x1="1251.1" y1="450.8" x2="108206.8" y2="16657.2" stroke="#515151" stroke-width="1" shape-rendering="crispEdges"/><line x1="1310.4" y1="450.5" x2="124507.7" y2="16657.2" stroke="#515151" stroke-width="1" shape-rendering="crispEdges"/><line x1="1607.6" y1="27" x2="1559.5" y2="866" stroke="#2c2c2c" stroke-width="1"/></g></svg>
<svg style="left:0;top:0" width="1902" height="983">
<defs>
<filter id="bl1" x="-20%" y="-50%" width="140%" height="200%"><feGaussianBlur stdDeviation="1.5"/></filter>
<filter id="bl3" x="-20%" y="-50%" width="140%" height="200%"><feGaussianBlur stdDeviation="3"/></filter>
<filter id="bl5" x="-20%" y="-50%" width="140%" height="200%"><feGaussianBlur stdDeviation="5"/></filter>
<linearGradient id="cbody" x1="0" y1="320" x2="0" y2="575" gradientUnits="userSpaceOnUse">
 <stop offset="0" stop-color="#535356"/><stop offset="0.38" stop-color="#545457"/><stop offset="0.64" stop-color="#505053"/><stop offset="0.69" stop-color="#454548"/><stop offset="0.74" stop-color="#404043"/><stop offset="0.88" stop-color="#363638"/><stop offset="1" stop-color="#333335"/>
</linearGradient>
<linearGradient id="cbump" x1="340" y1="0" x2="396" y2="0" gradientUnits="userSpaceOnUse"><stop offset="0" stop-color="#68686b"/><stop offset="0.5" stop-color="#5d5d60"/><stop offset="1" stop-color="#525255"/></linearGradient>
<linearGradient id="cunder" x1="950" y1="0" x2="990" y2="0" gradientUnits="userSpaceOnUse"><stop offset="0" stop-color="#6a6a6a"/><stop offset="0.5" stop-color="#9a9a9a"/><stop offset="1" stop-color="#5a5a5a"/></linearGradient>
<linearGradient id="cwin" x1="0" y1="330" x2="0" y2="416" gradientUnits="userSpaceOnUse"><stop offset="0" stop-color="#dcdce6"/><stop offset="1" stop-color="#cfcfdb"/></linearGradient>
<linearGradient id="chood" x1="0" y1="415" x2="0" y2="470" gradientUnits="userSpaceOnUse"><stop offset="0" stop-color="#48484b"/><stop offset="0.25" stop-color="#5a5a5d"/><stop offset="0.5" stop-color="#5e5e61"/><stop offset="1" stop-color="#545457"/></linearGradient>
<linearGradient id="cskirt" x1="0" y1="551" x2="0" y2="573" gradientUnits="userSpaceOnUse"><stop offset="0" stop-color="#4e4e4e"/><stop offset="0.3" stop-color="#5e5e5e"/><stop offset="0.36" stop-color="#3a3a3a"/><stop offset="0.42" stop-color="#5a5a5a"/><stop offset="1" stop-color="#555555"/></linearGradient>
<radialGradient id="chl" cx="0.6" cy="0.35" r="0.7"><stop offset="0" stop-color="#ffffff"/><stop offset="0.6" stop-color="#e4e4e8"/><stop offset="1" stop-color="#a8a8b0"/></radialGradient>
<radialGradient id="ctl" cx="0.75" cy="0.4" r="0.8"><stop offset="0" stop-color="#f0f0f8"/><stop offset="0.7" stop-color="#c8c8d8"/><stop offset="1" stop-color="#8a8aa8"/></radialGradient>
<linearGradient id="cstrip" x1="0" y1="0" x2="1" y2="0"><stop offset="0" stop-color="#e0e0e6"/><stop offset="1" stop-color="#a8a8b0"/></linearGradient>
</defs>
<!-- base silhouette -->
<path d="M396 565 C394.2 564.8 391.4 565.0 385 564 C378.6 563.0 364.2 561.0 357.5 559.3 C350.8 557.6 346.9 555.9 344.6 553.8 C342.3 551.7 342.8 550.1 343.7 546.5 C344.6 542.9 348.6 535.7 350 532 C351.4 528.3 352.9 527.6 352 524.5 C351.1 521.4 346.6 516.9 344.6 513.5 C342.6 510.1 340.6 507.1 340 504.3 C339.4 501.6 339.6 499.4 341 497 C342.4 494.6 346.5 491.9 348.3 489.7 C350.1 487.5 351.4 484.9 352 484 L360 465 C361.4 462.7 366.1 454.5 368.4 451.3 C370.7 448.1 368.2 448.1 374 445.8 C379.8 443.5 392.2 440.1 403.2 437.5 C414.2 434.9 424.5 432.6 439.8 430.2 C455.1 427.8 478.1 425.0 494.8 422.9 C511.5 420.8 526.7 418.6 540 417.5 C553.3 416.4 568.7 416.6 574.4 416.4 L589 404 C599.2 398.3 629.9 381.8 650 370 C670.1 358.2 695.2 340.7 709.9 333.1 C724.6 325.5 726.6 326.2 738.3 324.5 C750.0 322.8 758.8 323.1 780 322.6 C801.2 322.1 842.3 321.3 865.7 321.6 C889.1 321.9 904.5 322.9 920.4 324.4 C936.3 325.9 950.0 328.8 961.4 330.5 C972.8 332.2 984.2 333.9 988.7 334.6 L1002.4 364.7 L1013.3 397.5 L1013.3 397.5 C1020.1 398.3 1044.1 400.9 1053.9 402.4 C1063.7 403.9 1055.6 404.9 1072.2 406.4 C1088.8 407.9 1140.0 410.6 1153.6 411.5 L1155.6 426.8 C1156.4 431.6 1159.3 447.9 1160.7 455.3 C1162.1 462.8 1161.8 466.4 1163.7 471.5 C1165.6 476.6 1170.9 479.4 1171.9 485.8 C1172.9 492.2 1171.2 503.1 1169.8 510.2 C1168.4 517.3 1164.9 524.4 1163.7 528.5 C1162.5 532.6 1166.1 532.6 1162.7 534.6 C1159.3 536.6 1154.8 538.0 1143.4 540.7 C1132.1 543.4 1102.7 549.1 1094.6 550.8 L1092.5 506.1 C1090.8 502.4 1087.5 490.1 1082.4 483.7 C1077.3 477.3 1071.5 471.6 1062 467.5 C1052.5 463.4 1036.6 459.7 1025.4 459.3 C1014.2 458.9 1004.0 461.7 994.9 465.4 C985.8 469.1 976.9 475.6 970.5 481.7 C964.1 487.8 959.5 495.2 956.3 502 C953.1 508.8 952.2 517.0 951.2 522.4 C950.2 527.8 950.5 530.3 950.2 534.6 C949.9 538.9 949.7 545.8 949.6 548 L551 551.3 L550.6 551.9 C550.5 552.1 550.3 556.8 550 553 C549.7 549.2 549.6 537.1 548.7 529.4 C547.8 521.7 547.0 513.5 544.8 506.9 C542.6 500.3 539.2 494.8 535.5 489.7 C531.8 484.6 527.8 480.5 522.3 476.5 C516.8 472.5 510.1 468.4 502.4 465.9 C494.7 463.4 484.8 462.2 476 461.6 C467.2 461.1 458.3 461.2 449.5 462.6 C440.7 464.0 430.5 466.4 423 469.8 C415.5 473.2 409.2 477.5 404.6 483 C400.0 488.5 397.4 495.2 395.3 502.9 C393.2 510.6 392.0 519.0 392 529.4 C392.0 539.8 394.9 559.1 395.5 565 Z" fill="url(#cbody)"/>
<!-- hood / front fender shading -->
<path d="M352 484 L360 465 L368.4 451.3 L374 445.8 L403.2 437.5 L439.8 430.2 L494.8 422.9 L540 417.5 L574.4 416.4 L583 420 L582 470 L560 478 L540 476 L503.9 467.7 L476.5 461.3 L439.8 465.9 L416 476.9 L401.4 489.7 L380 492 Z" fill="url(#chood)"/>
<path d="M380 452 Q470 434 578 426" stroke="#6a6a6d" stroke-width="7" fill="none" filter="url(#bl3)" opacity="0.85"/>
<path d="M368.4 451.3 C369.3 450.4 368.2 448.1 374 445.8 C379.8 443.5 392.2 440.1 403.2 437.5 C414.2 434.9 424.5 432.6 439.8 430.2 C455.1 427.8 478.1 425.0 494.8 422.9 C511.5 420.8 526.7 418.6 540 417.5 C553.3 416.4 568.7 416.6 574.4 416.4 " stroke="#383838" stroke-width="1.3" fill="none"/>
<path d="M405 486 Q440 455 478 452 Q525 452 558 492" stroke="#5c5c5f" stroke-width="7" fill="none" filter="url(#bl5)" opacity="0.8"/>
<!-- front bumper -->
<clipPath id="bumpclip"><path d="M340 504 L341 497 L348.3 489.7 L360 487 L400 489 L394 510 L392.2 528.1 L396 565 L385 564 L357.5 559.3 L344.6 553.8 L343.7 546.5 L350 532 L352 524.5 L344.6 513.5Z"/></clipPath>
<path d="M340 504 L341 497 L348.3 489.7 L360 487 L400 489 L394 510 L392.2 528.1 L396 565 L385 564 L357.5 559.3 L344.6 553.8 L343.7 546.5 L350 532 L352 524.5 L344.6 513.5Z" fill="url(#cbump)"/>
<g clip-path="url(#bumpclip)"><path d="M344 491 Q370 488 398 492" stroke="#7c7c7c" stroke-width="4" fill="none" filter="url(#bl1)"/>
<path d="M342 502 Q370 497 396 500" stroke="#444" stroke-width="3" fill="none" filter="url(#bl1)" opacity="0.7"/></g>
<path d="M353 529 Q362 536 364.5 542 Q364 548 360 548.5 L353.5 547.5 Z" fill="#1e1e1e"/>
<path d="M353.6 531 L353.6 546" stroke="#e8e8e8" stroke-width="1.2"/>
<path d="M345 549.5 Q356 556 372 557" stroke="#9a9a9a" stroke-width="1.2" fill="none"/>
<!-- crease & lower body on doors -->
<path d="M548 495 Q760 489 955 489" stroke="#5a5a5d" stroke-width="4" fill="none" filter="url(#bl1)" opacity="0.9"/>
<path d="M551 538 L656 528 L950 521 L950 548 L551 551Z" fill="#333335" opacity="0.35" filter="url(#bl1)"/>
<!-- rear quarter highlight -->
<path d="M960 478 Q1025 440 1095 462 Q1135 480 1160 505" stroke="#58585b" stroke-width="9" fill="none" filter="url(#bl5)" opacity="0.9"/>
<path d="M1002 398 L1013.3 397.5 L1053.9 402.4 L1072.2 406.4 L1153.6 411.5 L1155.6 426.8 L1100 428 L1040 428 L1000 420Z" fill="#333" opacity="0.55" filter="url(#bl3)"/>
<path d="M1013 399 L1154 412" stroke="#383838" stroke-width="1.5" fill="none"/>
<path d="M1100 500 L1169 505 L1163 532 L1143 541 L1095 551Z" fill="#333" opacity="0.5" filter="url(#bl3)"/>
<path d="M1094.6 550.8 L1143.4 540.7 L1162.7 534.6 L1163.7 528.5 L1100 525 L1094 520Z" fill="#3e3a3b"/>
<!-- front arch interior -->
<clipPath id="farch"><path d="M395.5 565 C394.9 559.1 392.0 539.8 392 529.4 C392.0 519.0 393.2 510.6 395.3 502.9 C397.4 495.2 400.0 488.5 404.6 483 C409.2 477.5 415.5 473.2 423 469.8 C430.5 466.4 440.7 464.0 449.5 462.6 C458.3 461.2 467.2 461.1 476 461.6 C484.8 462.2 494.7 463.4 502.4 465.9 C510.1 468.4 516.8 472.5 522.3 476.5 C527.8 480.5 531.8 484.6 535.5 489.7 C539.2 494.8 542.6 500.3 544.8 506.9 C547.0 513.5 547.8 521.7 548.7 529.4 C549.6 537.1 549.7 549.2 550 553 C550.3 556.8 550.5 552.1 550.6 551.9 L520 553 L470 559 L430 561Z"/></clipPath>
<g clip-path="url(#farch)">
<rect x="385" y="455" width="170" height="115" fill="#474747"/>
<path d="M380 455 L560 455 L560 540 L439 542.6 L395.3 552.5 L380 553Z" fill="#2f313c"/>
<circle cx="489" cy="512" r="50" fill="#4d4d4d"/>
<path d="M520 470 Q548 490 552 540 L540 540 Q535 495 515 472Z" fill="#555" opacity="0.6"/>
</g>
<!-- strut -->
<path d="M478 463 L514 463 L508 470 L482 470Z" fill="#2a2a2a"/>
<rect x="488" y="469" width="12" height="29" fill="#3a3a3a"/>
<rect x="490" y="469" width="4" height="29" fill="#4e4e4e"/>
<path d="M482 496 L500 496 L500 506 L481 506Z" fill="#383838"/>
<!-- control arm -->
<path d="M509 505 L540 503 L548.7 533 L548.7 545 L514 552 L507 540Z" fill="#2e2e2e"/>
<path d="M508 530 L547 514 L548 519 L510 536Z" fill="#5a5a5a"/>
<ellipse cx="517" cy="516" rx="9" ry="7" fill="#505050"/>
<ellipse cx="519" cy="514" rx="4" ry="3" fill="#6a6a6a"/>
<!-- front disc -->
<ellipse cx="474.5" cy="538" rx="36.8" ry="34" fill="#4f4f4f"/>
<path d="M448 510 Q470 502 500 508 Q512 516 517 526" stroke="#262626" stroke-width="1.3" fill="none"/>
<path d="M454 515 Q442 528 448 556" stroke="#2a2a2a" stroke-width="1" stroke-dasharray="3 1" fill="none"/>
<path d="M473 522 A18 18 0 0 1 484 555" stroke="#2e2e2e" stroke-width="2.2" fill="none"/>
<circle cx="461.5" cy="537" r="0.9" fill="#222"/><circle cx="473" cy="528" r="0.9" fill="#222"/><circle cx="486" cy="536" r="0.9" fill="#222"/><circle cx="480" cy="550" r="0.9" fill="#222"/><circle cx="466" cy="550" r="0.9" fill="#222"/>
<path d="M438 518 L449 514 L444 525Z" fill="#c8c8e0"/>
<!-- rear arch interior -->
<clipPath id="rarch"><path d="M1094.6 550.8 C1094.2 543.3 1094.5 517.3 1092.5 506.1 C1090.5 494.9 1087.5 490.1 1082.4 483.7 C1077.3 477.3 1071.5 471.6 1062 467.5 C1052.5 463.4 1036.6 459.7 1025.4 459.3 C1014.2 458.9 1004.0 461.7 994.9 465.4 C985.8 469.1 976.9 475.6 970.5 481.7 C964.1 487.8 959.5 495.2 956.3 502 C953.1 508.8 952.2 517.0 951.2 522.4 C950.2 527.8 950.5 530.3 950.2 534.6 C949.9 538.9 949.7 545.8 949.6 548 L1000 548 L1050 545Z"/></clipPath>
<g clip-path="url(#rarch)">
<rect x="945" y="455" width="155" height="100" fill="#252527"/>
<path d="M960 470 Q990 458 1010 462 L1005 500 L965 505Z" fill="#2c2326" opacity="0.6" filter="url(#bl5)"/>
<path d="M950 536 L975 510 L1000 505 L1000 540Z" fill="#303030"/>
<rect x="945" y="537" width="60" height="15" fill="#464646"/>
<path d="M950 537.5 L989 546 L989 549 L950 541Z" fill="url(#cunder)"/>
<path d="M1000 519 L1094 524 L1094 552 L1000 552Z" fill="#3c3c3c"/>
<path d="M1053 520 L1094 522.5 L1094 529.5 L1053 527Z" fill="#4a4a4a"/>
<path d="M1053 521.5 L1094 524" stroke="#6a6a6a" stroke-width="0.9"/>
<path d="M955 508 L1000 508 L1000 518 L955 518Z" fill="#2a2a2a"/>
</g>
<rect x="1011.5" y="467.5" width="22" height="3" rx="1" fill="#6a6a6a"/>
<path d="M1012 471.0 Q1023 467.5 1034 471.0 L1034 473.5 Q1023 470.0 1012 473.5Z" fill="#2a2a2a"/><path d="M1013 470.6 Q1023 467.3 1033 470.6" stroke="#707070" stroke-width="0.9" fill="none"/><path d="M1012 476.3 Q1023 472.8 1034 476.3 L1034 478.8 Q1023 475.3 1012 478.8Z" fill="#2a2a2a"/><path d="M1013 475.9 Q1023 472.6 1033 475.9" stroke="#707070" stroke-width="0.9" fill="none"/><path d="M1012 481.6 Q1023 478.1 1034 481.6 L1034 484.1 Q1023 480.6 1012 484.1Z" fill="#2a2a2a"/><path d="M1013 481.2 Q1023 477.9 1033 481.2" stroke="#707070" stroke-width="0.9" fill="none"/><path d="M1012 486.9 Q1023 483.4 1034 486.9 L1034 489.4 Q1023 485.9 1012 489.4Z" fill="#2a2a2a"/><path d="M1013 486.5 Q1023 483.2 1033 486.5" stroke="#707070" stroke-width="0.9" fill="none"/><path d="M1012 492.2 Q1023 488.7 1034 492.2 L1034 494.7 Q1023 491.2 1012 494.7Z" fill="#2a2a2a"/><path d="M1013 491.8 Q1023 488.5 1033 491.8" stroke="#707070" stroke-width="0.9" fill="none"/><path d="M1012 497.5 Q1023 494.0 1034 497.5 L1034 500.0 Q1023 496.5 1012 500.0Z" fill="#2a2a2a"/><path d="M1013 497.1 Q1023 493.8 1033 497.1" stroke="#707070" stroke-width="0.9" fill="none"/>
<rect x="1015" y="500" width="14" height="3" fill="#2a2a2a"/>
<!-- rear disc -->
<ellipse cx="1020.7" cy="533.3" rx="32.7" ry="31.7" fill="#4e4e4e"/>
<circle cx="1019" cy="530.6" r="14" fill="none" stroke="#2a2a2a" stroke-width="1" stroke-dasharray="4 2"/>
<path d="M1039 507 Q1044 533 1039 551" stroke="#2a2a2a" stroke-width="1" stroke-dasharray="2 2" fill="none"/>
<!-- side skirt -->
<path d="M551 551.3 L949.6 548 L949.6 570 L551 572.3 Z" fill="url(#cskirt)"/>
<path d="M551 558.5 L949.6 555.5 L949.6 557 L551 560 Z" fill="#353535"/>
<path d="M811.6 570 L880 566 L949.6 557.5 L949.6 570 Z" fill="#2a2224"/>
<path d="M551 572.3 L949.6 570" stroke="#2e2e2e" stroke-width="1"/>
<!-- greenhouse -->
<path d="M574.4 416.4 L589 404 L650 370 L709.9 333.1 L738.3 324.5 L780 322.6 L865.7 321.6 L920.4 324.4 L961.4 330.5 L988.7 334.6 L1002.4 364.7 L1013.3 397.5 L1000 409.5 L968 410 L800 413.5 L583.6 419.8Z" fill="#444447"/>
<path d="M961 334 Q985 338 1000 370 L1011 396 L990 398 L975 360Z" fill="#4e4e51"/>
<path d="M574.4 416.4 L589 404 L650 370 L709.9 333.1 L712 336 L655 374 L584 418.4Z" fill="url(#cstrip)"/>
<!-- windows -->
<path d="M636.5 415.8 L641.8 389.3 L672.2 366.9 L711.9 343 L738.3 337.1 L780 335.8 L811.7 334.6 L795.3 412.5 Z" fill="url(#cwin)"/>
<path d="M831.5 334.6 L920.4 336.7 L940.9 342.8 L954.6 351 L968.2 363.3 L968.2 409.8 L824.7 411.8 Z" fill="url(#cwin)"/>
<path d="M968.2 364 L975 372 L980 408 L968.2 409.8Z" fill="#6a6a6a"/>
<path d="M973 380 L978 388 L974 400" stroke="#888" stroke-width="1" fill="none"/>
<!-- beltline -->
<path d="M583.6 419.8 L800 413.5 L1000 409.5 L1012 399 L1013 402 L1002 412 L800 416.5 L583.6 422.5Z" fill="#3e3e3e" opacity="0.8"/>
<!-- roof dashed seams -->
<path d="M712 340 Q760 330 810 329 L960 333" stroke="#2a2a2a" stroke-width="0.8" stroke-dasharray="4 3" fill="none"/>
<path d="M955 340 L995 375 L1000 398" stroke="#2a2a2a" stroke-width="0.8" stroke-dasharray="3 2" fill="none"/>
<!-- mirror -->
<path d="M632.6 388 Q616 384 614.5 400 Q614 414 626 416 L632.6 415Z" fill="#2c2c2c"/>
<ellipse cx="626" cy="403.5" rx="6" ry="4" fill="url(#chl)"/>
<!-- wiper -->
<path d="M569 417 L583 404 L589 403 L575 418Z" fill="#2e2e2e"/>
<!-- headlight -->
<ellipse cx="365" cy="468.5" rx="9.5" ry="18.5" transform="rotate(28 365 468.5)" fill="url(#chl)"/>
<!-- taillight -->
<path d="M1130.2 439 L1135.3 430.8 L1153.6 427.8 L1158.6 437 L1160.7 457.3 L1155.6 460.3 L1141.4 451.2 Z" fill="url(#ctl)"/>
<!-- door lines -->
<path d="M582 423 Q570 480 577 549" stroke="#2e2e2e" stroke-width="1" stroke-dasharray="4 2" fill="none"/>
<path d="M809.4 418.8 L807.2 533.7" stroke="#3a3a3a" stroke-width="1" fill="none"/>
<path d="M996 398 Q998 440 994 465" stroke="#2e2e2e" stroke-width="1" stroke-dasharray="4 2" fill="none"/>
<path d="M384 482 L405 497" stroke="#2e2e2e" stroke-width="1" stroke-dasharray="3 2" fill="none"/>
<path d="M1083 483 L1131 458" stroke="#2e2e2e" stroke-width="0.8" stroke-dasharray="3 2" fill="none"/>
<!-- handle -->
<path d="M753 441 Q754 433.5 764 433.5 L783 433.5 Q789 436 788 442 Q787 448 780 448.5 L760 448.5 Q752 447 753 441Z" fill="#4c4c4c"/>
<path d="M755 440 Q757 436 765 436 L782 436 Q786 438 786 442 L775 441 L768 445 L757 445Z" fill="#6a6a6a"/>
<path d="M768 441 L786 441 L784 446 L765 446Z" fill="#3a3a3a"/>
</svg>
<div class="t w" style="left:179px;top:36px;height:16px;line-height:16px;font-size:10.8px">User Persp</div>
<div class="t w" style="left:230px;top:844px;height:15px;line-height:15px;">(1)</div>
<svg style="left:178px;top:802px" width="50" height="45"><line x1="7" y1="39" x2="7" y2="13" stroke="#0000e6" stroke-width="2" shape-rendering="crispEdges"/><line x1="7" y1="38" x2="32" y2="38" stroke="#00e600" stroke-width="2" shape-rendering="crispEdges"/><line x1="7" y1="37" x2="9" y2="39.5" stroke="#e00000" stroke-width="1.5"/><text x="9" y="11.5" font-size="10.5" fill="#1a1aff" font-family="Liberation Sans">z</text><text x="34" y="37" font-size="10.5" fill="#00c800" font-family="Liberation Sans">y</text><text x="11.5" y="37" font-size="9.5" fill="#e00000" font-family="Liberation Sans">x</text></svg>
<svg style="left:1400px;top:658px" width="40" height="40"><circle cx="20" cy="20" r="9.6" fill="none" stroke="#fff" stroke-width="1.7"/><circle cx="20" cy="20" r="9.6" fill="none" stroke="#ff0000" stroke-width="1.7" stroke-dasharray="5.027 5.027" stroke-dashoffset="5.027"/><path d="M20 0 V15 M20 25 V40 M0 20 H15 M25 20 H40" stroke="#000" stroke-width="1.2"/></svg>
<div style="left:1633px;top:48px;width:16px;height:16px;background:#303030;border-radius:4px 0 0 4px"></div>
<svg style="left:1636px;top:51px" width="10" height="10"><path d="M5 1 V9 M1 5 H9" stroke="#8a8a8a" stroke-width="2"/></svg>
<svg style="left:1637px;top:28px" width="12" height="12"><path d="M1 0 L12 11 M5 0 L12 7 M9 0 L12 3" stroke="#ddd" stroke-width="0.9"/><path d="M2 0 L12 10 M6 0 L12 6" stroke="#111" stroke-width="0.7"/></svg>
<div style="left:0px;top:866px;width:1649px;height:26px;background:#727272"></div>
<div style="left:0px;top:866px;width:1649px;height:1px;background:#858585"></div>
<div style="left:0px;top:892px;width:1649px;height:1px;background:#000"></div>
<svg style="left:0px;top:878px" width="14" height="14"><path d="M0 2 L10 12 M0 6 L6 12 M0 10 L2 12" stroke="#2a2a2a" stroke-width="1.2"/><path d="M0 3 L9 12 M0 7 L5 12" stroke="#a0a0a0" stroke-width="0.8"/></svg>
<div class="menu" style="left:9px;top:869px;width:30px;height:20px;border-radius:4px"></div>
<svg style="left:13px;top:871px" width="16" height="16"><path d="M8 1.5 L14 4 L14 11.5 L8 14.5 L2 11.5 L2 4 Z" fill="#cfcfcf" stroke="#111" stroke-width="0.9"/><path d="M8 7 L14 4 M8 7 L2 4 M8 7 V14.5" stroke="#111" stroke-width="0.8"/><path d="M8 7 L14 4 L14 11.5 L8 14.5 Z" fill="#8a8a8a"/></svg>
<svg style="left:29px;top:872px" width="8" height="14"><path d="M1 6 L4 1 L7 6Z M1 8 L4 13 L7 8Z" fill="#aaaaaa"/></svg>
<div class="t" style="left:52px;top:870px;height:20px;line-height:20px;">View</div>
<div class="t" style="left:96px;top:870px;height:20px;line-height:20px;">Select</div>
<div class="t" style="left:147px;top:870px;height:20px;line-height:20px;">Add</div>
<div class="t" style="left:186px;top:870px;height:20px;line-height:20px;">Object</div>
<div class="menu" style="left:233px;top:869px;width:112px;height:20px;"></div>
<svg style="left:237px;top:871px" width="16" height="16"><path d="M8 1.5 L14 4.5 L14 11.5 L8 14.5 L2 11.5 L2 4.5 Z" fill="#e8a050" stroke="#3a2000" stroke-width="0.9"/><path d="M8 7.5 L14 4.5 M8 7.5 L2 4.5 M8 7.5 V14.5" stroke="#6a3a00" stroke-width="0.8"/><path d="M2 4.5 L8 1.5 L14 4.5 L8 7.5Z" fill="#f8cf90"/></svg>
<div class="t w" style="left:256px;top:870px;height:20px;line-height:20px;">Object Mode</div>
<svg style="left:335px;top:872px" width="8" height="14"><path d="M1 6 L4 1 L7 6Z M1 8 L4 13 L7 8Z" fill="#aaaaaa"/></svg>
<div class="menu" style="left:350px;top:869px;width:36px;height:20px;"></div>
<svg style="left:353px;top:871px" width="16" height="16"><circle cx="8" cy="8" r="6" fill="#eee" stroke="#222" stroke-width="0.8"/></svg>
<svg style="left:375px;top:872px" width="8" height="14"><path d="M1 6 L4 1 L7 6Z M1 8 L4 13 L7 8Z" fill="#aaaaaa"/></svg>
<div class="menu" style="left:391px;top:869px;width:53px;height:20px;"></div>
<svg style="left:394px;top:871px" width="16" height="16"><circle cx="6" cy="6" r="4.5" fill="#ddd" stroke="#222" stroke-width="0.8"/><circle cx="10" cy="10" r="4.5" fill="#ddd" stroke="#222" stroke-width="0.8"/><rect x="6" y="6" width="4" height="4" fill="#3a70c0"/></svg>
<svg style="left:415px;top:872px" width="8" height="14"><path d="M1 6 L4 1 L7 6Z M1 8 L4 13 L7 8Z" fill="#aaaaaa"/></svg>
<div style="left:424px;top:869px;width:21px;height:20px;background:linear-gradient(#b2b2b2,#949494);border:1px solid #1e1e1e;border-radius:0 4px 4px 0"></div>
<svg style="left:426px;top:871px" width="16" height="16"><path d="M2 9 H14 M5 7 L2 9 L5 11 M11 7 L14 9 L11 11" stroke="#111" stroke-width="1.2" fill="none"/><circle cx="4" cy="3" r="1.2" fill="#3a70c0"/><circle cx="8" cy="3" r="1.2" fill="#3a70c0"/><circle cx="12" cy="3" r="1.2" fill="#3a70c0"/></svg>
<div class="menu" style="left:450px;top:869px;width:81px;height:20px;border-radius:4px 0 0 4px"></div>
<svg style="left:452px;top:871px" width="16" height="16"><path d="M8 9 V3" stroke="#0a1a60" stroke-width="3.4" stroke-linecap="round"/><path d="M8 9 L3 13" stroke="#600a0a" stroke-width="3.4" stroke-linecap="round"/><path d="M8 9 L13 13" stroke="#0a500a" stroke-width="3.4" stroke-linecap="round"/><path d="M8 9 V3" stroke="#5a8ae8" stroke-width="1.8" stroke-linecap="round"/><path d="M8 9 L3 13" stroke="#e04a3a" stroke-width="1.8" stroke-linecap="round"/><path d="M8 9 L13 13" stroke="#5ac03a" stroke-width="1.8" stroke-linecap="round"/><circle cx="8" cy="9" r="1.1" fill="#fff"/><circle cx="8" cy="3" r="0.8" fill="#fff"/><circle cx="3" cy="13" r="0.8" fill="#fff"/><circle cx="13" cy="13" r="0.8" fill="#fff"/></svg>
<div style="left:470px;top:869px;width:20px;height:20px;background:linear-gradient(#4a72b8,#628ed4);border:1px solid #1e1e1e"></div>
<svg style="left:472px;top:871px" width="16" height="16"><path d="M3 13 L9.5 6.5" stroke="#0a1a50" stroke-width="3.6" stroke-linecap="round"/><path d="M13.5 2.5 L12 9 L7 4Z" fill="#8ab4f0" stroke="#0a1a50" stroke-width="1.2" stroke-linejoin="round"/><path d="M3 13 L9.5 6.5" stroke="#8ab4f0" stroke-width="1.6" stroke-linecap="round"/></svg>
<div style="left:490px;top:870px;width:1px;height:18px;background:#1e1e1e"></div>
<svg style="left:491px;top:871px" width="16" height="16"><path d="M3.5 13 Q4 4 12.5 3.5" stroke="#0a1a50" stroke-width="3.6" fill="none" stroke-linecap="round"/><path d="M3.5 13 Q4 4 12.5 3.5" stroke="#6a8ec8" stroke-width="1.8" fill="none" stroke-linecap="round"/></svg>
<div style="left:510px;top:870px;width:1px;height:18px;background:#1e1e1e"></div>
<svg style="left:511px;top:871px" width="16" height="16"><path d="M3 13 L9 7" stroke="#0a1a50" stroke-width="3.4" stroke-linecap="round"/><rect x="8" y="2.5" width="5.5" height="5.5" fill="#6a8ec8" stroke="#0a1a50" stroke-width="1.1"/><path d="M3 13 L9 7" stroke="#6a8ec8" stroke-width="1.6" stroke-linecap="round"/></svg>
<div style="left:530px;top:870px;width:1px;height:18px;background:#1e1e1e"></div>
<div class="menu" style="left:530px;top:869px;width:72px;height:20px;border-radius:0 4px 4px 0"></div>
<div class="t w" style="left:537px;top:870px;height:20px;line-height:20px;">Global</div>
<svg style="left:591px;top:872px" width="8" height="14"><path d="M1 6 L4 1 L7 6Z M1 8 L4 13 L7 8Z" fill="#aaaaaa"/></svg>
<div style="left:607px;top:869px;width:50px;height:21px;background:linear-gradient(#9c9c9c,#8e8e8e);border:1px solid #2a2a2a;border-radius:4px"></div>
<svg style="left:607px;top:869px" width="50" height="21"><rect x="9.5" y="0" width="1" height="21" fill="#2a2a2a"/><rect x="19.5" y="0" width="1" height="21" fill="#2a2a2a"/><rect x="29.5" y="0" width="1" height="21" fill="#2a2a2a"/><rect x="39.5" y="0" width="1" height="21" fill="#2a2a2a"/><rect x="0" y="10" width="50" height="1" fill="#2a2a2a"/></svg>
<div style="left:662px;top:869px;width:50px;height:21px;background:linear-gradient(#9c9c9c,#8e8e8e);border:1px solid #2a2a2a;border-radius:4px"></div>
<svg style="left:662px;top:869px" width="50" height="21"><rect x="9.5" y="0" width="1" height="21" fill="#2a2a2a"/><rect x="19.5" y="0" width="1" height="21" fill="#2a2a2a"/><rect x="29.5" y="0" width="1" height="21" fill="#2a2a2a"/><rect x="39.5" y="0" width="1" height="21" fill="#2a2a2a"/><rect x="0" y="10" width="50" height="1" fill="#2a2a2a"/></svg>
<svg style="left:609px;top:871px" width="8" height="8"><circle cx="4" cy="4" r="2.4" fill="#777" stroke="#222" stroke-width="1"/></svg>
<div style="left:717px;top:869px;width:20px;height:20px;border-radius:4px;background:linear-gradient(#6c6c6c,#575757);border:1px solid #222"></div>
<svg style="left:719px;top:871px" width="16" height="16"><defs><linearGradient id="lkg" x1="0" y1="0" x2="1" y2="1"><stop offset="0" stop-color="#eee"/><stop offset="1" stop-color="#888"/></linearGradient></defs><rect x="1.5" y="2.5" width="9" height="10" fill="url(#lkg)" stroke="#111" stroke-width="1"/><ellipse cx="12" cy="7.5" rx="2" ry="2.5" fill="none" stroke="#111" stroke-width="2.2"/><ellipse cx="12" cy="11" rx="2" ry="2.5" fill="none" stroke="#111" stroke-width="2.2"/><ellipse cx="12" cy="7.5" rx="2" ry="2.5" fill="none" stroke="#eee" stroke-width="0.9"/><ellipse cx="12" cy="11" rx="2" ry="2.5" fill="none" stroke="#eee" stroke-width="0.9"/></svg>
<div class="tool" style="left:742px;top:869px;width:20px;height:20px;border-radius:4px 0 0 4px"></div>
<svg style="left:744px;top:871px" width="16" height="16"><path d="M3.5 11 L8.5 6 A3 3 0 0 1 12.5 10 L7.5 15" stroke="#666" stroke-width="4.2" fill="none"/><path d="M3.5 11 L8.5 6 A3 3 0 0 1 12.5 10 L7.5 15" stroke="#aaa" stroke-width="2.4" fill="none"/></svg>
<div class="menu" style="left:761px;top:869px;width:36px;height:20px;border-radius:0 4px 4px 0"></div>
<svg style="left:764px;top:870px" width="18" height="18"><path d="M3 9 H16 M3 14 H16 M8 6 V17 M13 6 V17" stroke="#111" stroke-width="2.4"/><path d="M3 9 H16 M3 14 H16 M8 6 V17 M13 6 V17" stroke="#fff" stroke-width="1"/><circle cx="6" cy="5" r="3.6" fill="#fff" stroke="#333" stroke-width="0.6"/><circle cx="6" cy="5" r="2" fill="#3a70e0"/></svg>
<svg style="left:786px;top:872px" width="8" height="14"><path d="M1 6 L4 1 L7 6Z M1 8 L4 13 L7 8Z" fill="#aaaaaa"/></svg>
<div class="tool" style="left:803px;top:869px;width:39px;height:20px;border-radius:4px"></div>
<div style="left:822px;top:870px;width:1px;height:18px;background:#333"></div>
<svg style="left:805px;top:871px" width="16" height="16"><rect x="1" y="5" width="13" height="9" rx="1" fill="#ddd" stroke="#111"/><circle cx="8.5" cy="9.5" r="3.2" fill="#333" stroke="#111" stroke-width="0.7"/><circle cx="8.5" cy="9.5" r="1.8" fill="#7a5a6a"/><circle cx="3" cy="7" r="0.7" fill="#d03030"/><path d="M12.5 0.5 L13.5 3 L16 4 L13.5 5 L12.5 7.5 L11.5 5 L9 4 L11.5 3Z" fill="#f8e060" stroke="#806000" stroke-width="0.5"/></svg>
<svg style="left:824px;top:871px" width="16" height="16"><rect x="1.5" y="8" width="13" height="7" fill="#555" stroke="#111"/><path d="M1 8 L14 3.5 L14.5 6 L1.5 10Z" fill="#eee" stroke="#111" stroke-width="0.8"/><path d="M4 7 L6 4.5 M8 5.8 L10 3.5 M12 4.5 L13.5 2.5" stroke="#111" stroke-width="1.1"/><rect x="1" y="8" width="2" height="5" fill="#3a70e0"/><path d="M4 12 H13" stroke="#888" stroke-width="0.8"/></svg>
<div style="left:0px;top:893px;width:1649px;height:64px;background:#727272"></div>
<div style="left:0px;top:893px;width:285px;height:46px;background:#444444"></div>
<div style="left:1489px;top:893px;width:160px;height:46px;background:#444444"></div>
<svg style="left:0;top:893px" width="1649" height="46"><rect x="13.9" y="0" width="1" height="46" fill="#3c3c3c"/><rect x="38.0" y="0" width="1" height="46" fill="#303030"/><rect x="62.2" y="0" width="1" height="46" fill="#3c3c3c"/><rect x="86.4" y="0" width="1" height="46" fill="#303030"/><rect x="110.5" y="0" width="1" height="46" fill="#3c3c3c"/><rect x="134.7" y="0" width="1" height="46" fill="#303030"/><rect x="158.9" y="0" width="1" height="46" fill="#3c3c3c"/><rect x="183.0" y="0" width="1" height="46" fill="#303030"/><rect x="207.2" y="0" width="1" height="46" fill="#3c3c3c"/><rect x="231.4" y="0" width="1" height="46" fill="#303030"/><rect x="255.5" y="0" width="1" height="46" fill="#3c3c3c"/><rect x="279.7" y="0" width="1" height="46" fill="#303030"/><rect x="303.9" y="0" width="1" height="46" fill="#666666"/><rect x="328.0" y="0" width="1" height="46" fill="#5a5a5a"/><rect x="352.2" y="0" width="1" height="46" fill="#666666"/><rect x="376.4" y="0" width="1" height="46" fill="#5a5a5a"/><rect x="400.5" y="0" width="1" height="46" fill="#666666"/><rect x="424.7" y="0" width="1" height="46" fill="#5a5a5a"/><rect x="448.9" y="0" width="1" height="46" fill="#666666"/><rect x="473.0" y="0" width="1" height="46" fill="#5a5a5a"/><rect x="497.2" y="0" width="1" height="46" fill="#666666"/><rect x="521.4" y="0" width="1" height="46" fill="#5a5a5a"/><rect x="545.5" y="0" width="1" height="46" fill="#666666"/><rect x="569.7" y="0" width="1" height="46" fill="#5a5a5a"/><rect x="593.9" y="0" width="1" height="46" fill="#666666"/><rect x="618.0" y="0" width="1" height="46" fill="#5a5a5a"/><rect x="642.2" y="0" width="1" height="46" fill="#666666"/><rect x="666.4" y="0" width="1" height="46" fill="#5a5a5a"/><rect x="690.5" y="0" width="1" height="46" fill="#666666"/><rect x="714.7" y="0" width="1" height="46" fill="#5a5a5a"/><rect x="738.9" y="0" width="1" height="46" fill="#666666"/><rect x="763.0" y="0" width="1" height="46" fill="#5a5a5a"/><rect x="787.2" y="0" width="1" height="46" fill="#666666"/><rect x="811.4" y="0" width="1" height="46" fill="#5a5a5a"/><rect x="835.5" y="0" width="1" height="46" fill="#666666"/><rect x="859.7" y="0" width="1" height="46" fill="#5a5a5a"/><rect x="883.9" y="0" width="1" height="46" fill="#666666"/><rect x="908.0" y="0" width="1" height="46" fill="#5a5a5a"/><rect x="932.2" y="0" width="1" height="46" fill="#666666"/><rect x="956.4" y="0" width="1" height="46" fill="#5a5a5a"/><rect x="980.5" y="0" width="1" height="46" fill="#666666"/><rect x="1004.7" y="0" width="1" height="46" fill="#5a5a5a"/><rect x="1028.9" y="0" width="1" height="46" fill="#666666"/><rect x="1053.0" y="0" width="1" height="46" fill="#5a5a5a"/><rect x="1077.2" y="0" width="1" height="46" fill="#666666"/><rect x="1101.4" y="0" width="1" height="46" fill="#5a5a5a"/><rect x="1125.5" y="0" width="1" height="46" fill="#666666"/><rect x="1149.7" y="0" width="1" height="46" fill="#5a5a5a"/><rect x="1173.9" y="0" width="1" height="46" fill="#666666"/><rect x="1198.0" y="0" width="1" height="46" fill="#5a5a5a"/><rect x="1222.2" y="0" width="1" height="46" fill="#666666"/><rect x="1246.4" y="0" width="1" height="46" fill="#5a5a5a"/><rect x="1270.5" y="0" width="1" height="46" fill="#666666"/><rect x="1294.7" y="0" width="1" height="46" fill="#5a5a5a"/><rect x="1318.9" y="0" width="1" height="46" fill="#666666"/><rect x="1343.0" y="0" width="1" height="46" fill="#5a5a5a"/><rect x="1367.2" y="0" width="1" height="46" fill="#666666"/><rect x="1391.4" y="0" width="1" height="46" fill="#5a5a5a"/><rect x="1415.5" y="0" width="1" height="46" fill="#666666"/><rect x="1439.7" y="0" width="1" height="46" fill="#5a5a5a"/><rect x="1463.9" y="0" width="1" height="46" fill="#666666"/><rect x="1488.0" y="0" width="1" height="46" fill="#5a5a5a"/><rect x="1512.2" y="0" width="1" height="46" fill="#3c3c3c"/><rect x="1536.4" y="0" width="1" height="46" fill="#303030"/><rect x="1560.5" y="0" width="1" height="46" fill="#3c3c3c"/><rect x="1584.7" y="0" width="1" height="46" fill="#303030"/><rect x="1608.9" y="0" width="1" height="46" fill="#3c3c3c"/><rect x="1633.0" y="0" width="1" height="46" fill="#303030"/></svg>
<div style="left:280px;top:893px;width:4px;height:46px;background:#383838"></div>
<div style="left:284px;top:893px;width:3px;height:46px;background:#5fc23a"></div>
<div style="left:0px;top:939px;width:1649px;height:18px;background:#727272"></div>
<div style="left:4px;top:940px;width:1638px;height:13px;background:linear-gradient(#8e8e8e,#a4a4a4 45%,#959595);border:1px solid #3a3a3a;border-radius:6.5px"></div>
<div style="left:6px;top:942px;width:9px;height:9px;background:#6a6a6a;border-radius:5px"></div>
<div class="t c" style="left:18.9px;top:940px;width:40px;height:14px;line-height:14px;">-50</div>
<div class="t c" style="left:67.0px;top:940px;width:40px;height:14px;line-height:14px;">-40</div>
<div class="t c" style="left:115.2px;top:940px;width:40px;height:14px;line-height:14px;">-30</div>
<div class="t c" style="left:163.3px;top:940px;width:40px;height:14px;line-height:14px;">-20</div>
<div class="t c" style="left:211.5px;top:940px;width:40px;height:14px;line-height:14px;">-10</div>
<div class="t c" style="left:259.6px;top:940px;width:40px;height:14px;line-height:14px;">0</div>
<div class="t c" style="left:307.7px;top:940px;width:40px;height:14px;line-height:14px;">10</div>
<div class="t c" style="left:355.9px;top:940px;width:40px;height:14px;line-height:14px;">20</div>
<div class="t c" style="left:404.0px;top:940px;width:40px;height:14px;line-height:14px;">30</div>
<div class="t c" style="left:452.2px;top:940px;width:40px;height:14px;line-height:14px;">40</div>
<div class="t c" style="left:500.3px;top:940px;width:40px;height:14px;line-height:14px;">50</div>
<div class="t c" style="left:548.4px;top:940px;width:40px;height:14px;line-height:14px;">60</div>
<div class="t c" style="left:596.6px;top:940px;width:40px;height:14px;line-height:14px;">70</div>
<div class="t c" style="left:644.7px;top:940px;width:40px;height:14px;line-height:14px;">80</div>
<div class="t c" style="left:692.9px;top:940px;width:40px;height:14px;line-height:14px;">90</div>
<div class="t c" style="left:741.0px;top:940px;width:40px;height:14px;line-height:14px;">100</div>
<div class="t c" style="left:789.1px;top:940px;width:40px;height:14px;line-height:14px;">110</div>
<div class="t c" style="left:837.3px;top:940px;width:40px;height:14px;line-height:14px;">120</div>
<div class="t c" style="left:885.4px;top:940px;width:40px;height:14px;line-height:14px;">130</div>
<div class="t c" style="left:933.6px;top:940px;width:40px;height:14px;line-height:14px;">140</div>
<div class="t c" style="left:981.7px;top:940px;width:40px;height:14px;line-height:14px;">150</div>
<div class="t c" style="left:1029.8px;top:940px;width:40px;height:14px;line-height:14px;">160</div>
<div class="t c" style="left:1078.0px;top:940px;width:40px;height:14px;line-height:14px;">170</div>
<div class="t c" style="left:1126.1px;top:940px;width:40px;height:14px;line-height:14px;">180</div>
<div class="t c" style="left:1174.3px;top:940px;width:40px;height:14px;line-height:14px;">190</div>
<div class="t c" style="left:1222.4px;top:940px;width:40px;height:14px;line-height:14px;">200</div>
<div class="t c" style="left:1270.5px;top:940px;width:40px;height:14px;line-height:14px;">210</div>
<div class="t c" style="left:1318.7px;top:940px;width:40px;height:14px;line-height:14px;">220</div>
<div class="t c" style="left:1366.8px;top:940px;width:40px;height:14px;line-height:14px;">230</div>
<div class="t c" style="left:1415.0px;top:940px;width:40px;height:14px;line-height:14px;">240</div>
<div class="t c" style="left:1463.1px;top:940px;width:40px;height:14px;line-height:14px;">250</div>
<div class="t c" style="left:1511.2px;top:940px;width:40px;height:14px;line-height:14px;">260</div>
<div class="t c" style="left:1559.4px;top:940px;width:40px;height:14px;line-height:14px;">270</div>
<div class="t c" style="left:1607.5px;top:940px;width:40px;height:14px;line-height:14px;">280</div>
<svg style="left:1636px;top:894px" width="13" height="13"><path d="M1 0 L13 12 M5 0 L13 8 M9 0 L13 4" stroke="#ddd" stroke-width="0.9"/><path d="M2 0 L13 11 M6 0 L13 7" stroke="#111" stroke-width="0.7"/></svg>
<div style="left:0px;top:956px;width:1649px;height:1px;background:#5c5c5c"></div>
<div style="left:0px;top:957px;width:1649px;height:1px;background:#8a8a8a"></div>
<div style="left:0px;top:958px;width:1649px;height:25px;background:#686868"></div>
<svg style="left:0px;top:969px" width="14" height="14"><path d="M0 2 L10 12 M0 6 L6 12 M0 10 L2 12" stroke="#2a2a2a" stroke-width="1.2"/><path d="M0 3 L9 12 M0 7 L5 12" stroke="#a0a0a0" stroke-width="0.8"/></svg>
<div class="menu" style="left:9px;top:960px;width:30px;height:20px;border-radius:4px"></div>
<svg style="left:13px;top:962px" width="16" height="16"><circle cx="8" cy="8" r="6.5" fill="#eee" stroke="#222"/><path d="M8 8 L5 4" stroke="#d02020" stroke-width="1.6"/></svg>
<svg style="left:29px;top:963px" width="8" height="14"><path d="M1 6 L4 1 L7 6Z M1 8 L4 13 L7 8Z" fill="#aaaaaa"/></svg>
<div class="t" style="left:52px;top:961px;height:20px;line-height:20px;">View</div>
<div class="t" style="left:96px;top:961px;height:20px;line-height:20px;">Marker</div>
<div class="t" style="left:151px;top:961px;height:20px;line-height:20px;">Frame</div>
<div class="t" style="left:203px;top:961px;height:20px;line-height:20px;">Playback</div>
<div class="tool" style="left:261px;top:960px;width:20px;height:20px;border-radius:4px 0 0 4px"></div>
<svg style="left:263px;top:962px" width="16" height="16"><circle cx="8" cy="8" r="6.5" fill="#eee" stroke="#222"/><path d="M8 8 V1.5 A6.5 6.5 0 0 1 14.5 8Z" fill="#f0a020"/><path d="M8 8 L5 11" stroke="#d02020" stroke-width="1.3"/></svg>
<div class="tool" style="left:280px;top:960px;width:21px;height:20px;border-radius:0 4px 4px 0"></div>
<svg style="left:283px;top:962px" width="16" height="16"><path d="M5 8 V5 A3 3 0 0 1 11 5 V8" stroke="#111" stroke-width="1.3" fill="none"/><rect x="3.5" y="8" width="9" height="7" fill="#ddd" stroke="#111"/></svg>
<div class="num" style="left:307px;top:960px;width:119px;height:20px;border-radius:10px 0 0 10px"></div>
<div class="t" style="left:322px;top:961px;height:20px;line-height:20px;">Start:</div>
<div class="t r" style="left:389px;top:961px;width:18px;height:20px;line-height:20px;">1</div>
<svg style="left:312px;top:966px" width="6" height="8"><path d="M5 0 L1 4 L5 8Z" fill="#777"/></svg>
<svg style="left:413px;top:966px" width="6" height="8"><path d="M1 0 L5 4 L1 8Z" fill="#777"/></svg>
<div class="num" style="left:425px;top:960px;width:109px;height:20px;border-left:none;border-radius:0 10px 10px 0"></div>
<div style="left:422px;top:961px;width:1px;height:18px;background:#2a2a2a"></div>
<div class="t" style="left:437px;top:961px;height:20px;line-height:20px;">End:</div>
<div class="t r" style="left:490px;top:961px;width:28px;height:20px;line-height:20px;">250</div>
<svg style="left:429px;top:966px" width="6" height="8"><path d="M5 0 L1 4 L5 8Z" fill="#777"/></svg>
<svg style="left:524px;top:966px" width="6" height="8"><path d="M1 0 L5 4 L1 8Z" fill="#777"/></svg>
<div class="num" style="left:540px;top:960px;width:89px;height:20px;border-radius:10px"></div>
<div class="t r" style="left:590px;top:961px;width:22px;height:20px;line-height:20px;">1</div>
<svg style="left:546px;top:966px" width="6" height="8"><path d="M5 0 L1 4 L5 8Z" fill="#777"/></svg>
<svg style="left:618px;top:966px" width="6" height="8"><path d="M1 0 L5 4 L1 8Z" fill="#777"/></svg>
<div class="tool" style="left:645px;top:960px;width:120px;height:20px;border-radius:4px"></div>
<svg style="left:647px;top:962px" width="16" height="16"><path d="M2 3 V13 M4 8 L9 3 V13Z M9 8 L14 3 V13Z" fill="#eee" stroke="#111" stroke-width="0.9"/></svg>
<div style="left:665px;top:960px;width:1px;height:20px;background:#2a2a2a"></div>
<svg style="left:667px;top:962px" width="16" height="16"><path d="M3 8 L8 3 V13Z M8 8 L13 3 V13Z" fill="#eee" stroke="#111" stroke-width="0.9"/></svg>
<div style="left:685px;top:960px;width:1px;height:20px;background:#2a2a2a"></div>
<svg style="left:687px;top:962px" width="16" height="16"><path d="M3 8 L13 2 V14Z" fill="#eee" stroke="#111" stroke-width="0.9"/></svg>
<div style="left:705px;top:960px;width:1px;height:20px;background:#2a2a2a"></div>
<svg style="left:707px;top:962px" width="16" height="16"><path d="M3 2 L13 8 L3 14Z" fill="#eee" stroke="#111" stroke-width="0.9"/></svg>
<div style="left:725px;top:960px;width:1px;height:20px;background:#2a2a2a"></div>
<svg style="left:727px;top:962px" width="16" height="16"><path d="M3 3 L8 8 L3 13Z M8 3 L13 8 L8 13Z" fill="#eee" stroke="#111" stroke-width="0.9"/></svg>
<div style="left:745px;top:960px;width:1px;height:20px;background:#2a2a2a"></div>
<svg style="left:747px;top:962px" width="16" height="16"><path d="M2 3 L7 8 L2 13Z M7 3 L12 8 L7 13Z M14 3 V13" fill="#eee" stroke="#111" stroke-width="0.9"/></svg>
<div class="menu" style="left:771px;top:960px;width:115px;height:20px;"></div>
<div class="t w" style="left:778px;top:961px;height:20px;line-height:20px;">No Sync</div>
<svg style="left:875px;top:963px" width="8" height="14"><path d="M1 6 L4 1 L7 6Z M1 8 L4 13 L7 8Z" fill="#aaaaaa"/></svg>
<div class="tool" style="left:900px;top:960px;width:21px;height:20px;border-radius:4px"></div>
<svg style="left:904px;top:964px" width="12" height="12"><circle cx="6" cy="6" r="5" fill="#e04020" stroke="#333" stroke-width="0.8"/></svg>
<div class="tfield" style="left:926px;top:960px;width:132px;height:20px;border-radius:4px 0 0 4px"></div>
<svg style="left:930px;top:962px" width="18" height="16"><g transform="translate(3,0)"><circle cx="4.5" cy="11.5" r="2.6" fill="none" stroke="#222" stroke-width="2.6"/><path d="M6.5 9.5 L13 3 M11 5 L13 7 M12.5 3.5 L14.5 5.5" stroke="#222" stroke-width="2.8"/><circle cx="4.5" cy="11.5" r="2.6" fill="none" stroke="#f4f4f4" stroke-width="1.3"/><path d="M6.5 9.5 L13 3 M11 5 L13 7 M12.5 3.5 L14.5 5.5" stroke="#f4f4f4" stroke-width="1.4"/></g><circle cx="4" cy="11.5" r="2.3" fill="none" stroke="#333" stroke-width="2.4"/><path d="M4 9 V1.5 M4 2 H6.5 M4 4.5 H6" stroke="#333" stroke-width="2.4"/><circle cx="4" cy="11.5" r="2.3" fill="none" stroke="#f0e8a0" stroke-width="1.1"/><path d="M4 9 V1.5 M4 2 H6.5 M4 4.5 H6" stroke="#f0e8a0" stroke-width="1.2"/></svg>
<div class="tool" style="left:1057px;top:960px;width:21px;height:20px;border-radius:0"></div>
<svg style="left:1059px;top:962px" width="16" height="16"><circle cx="4.5" cy="11.5" r="2.6" fill="none" stroke="#222" stroke-width="2.6"/><path d="M6.5 9.5 L13 3 M11 5 L13 7 M12.5 3.5 L14.5 5.5" stroke="#222" stroke-width="2.8"/><circle cx="4.5" cy="11.5" r="2.6" fill="none" stroke="#f4f4f4" stroke-width="1.3"/><path d="M6.5 9.5 L13 3 M11 5 L13 7 M12.5 3.5 L14.5 5.5" stroke="#f4f4f4" stroke-width="1.4"/></svg>
<div class="tool" style="left:1077px;top:960px;width:21px;height:20px;border-radius:0 4px 4px 0"></div>
<svg style="left:1079px;top:962px" width="16" height="16"><circle cx="4.5" cy="11.5" r="2.6" fill="none" stroke="#222" stroke-width="2.6"/><path d="M6.5 9.5 L13 3 M11 5 L13 7 M12.5 3.5 L14.5 5.5" stroke="#222" stroke-width="2.8"/><circle cx="4.5" cy="11.5" r="2.6" fill="none" stroke="#f4f4f4" stroke-width="1.3"/><path d="M6.5 9.5 L13 3 M11 5 L13 7 M12.5 3.5 L14.5 5.5" stroke="#f4f4f4" stroke-width="1.4"/><path d="M2 2 L14 14" stroke="#e03030" stroke-width="1.5"/></svg>
<div style="left:1649px;top:27px;width:1px;height:956px;background:#000"></div>
<div style="left:1650px;top:27px;width:1px;height:956px;background:#8a8a8a"></div>
<div style="left:1651px;top:27px;width:251px;height:165px;background:#686868"></div>
<div style="left:1651px;top:27px;width:251px;height:1px;background:#7e7e7e"></div>
<div class="menu" style="left:1659px;top:30px;width:30px;height:20px;border-radius:4px"></div>
<svg style="left:1662px;top:32px" width="16" height="16"><rect x="1.5" y="1.5" width="7" height="3" fill="#f0a030" stroke="#5a3000" stroke-width="0.6"/><path d="M3.5 4.5 V12.5 M3.5 8.5 H7.5 M3.5 12.5 H7.5" stroke="#8ab0e0" stroke-width="0.9" fill="none"/><rect x="7.5" y="7.5" width="6" height="2.2" fill="#fff" stroke="#222" stroke-width="0.5"/><rect x="7.5" y="11.5" width="6" height="2.2" fill="#fff" stroke="#222" stroke-width="0.5"/></svg>
<svg style="left:1679px;top:33px" width="8" height="14"><path d="M1 6 L4 1 L7 6Z M1 8 L4 13 L7 8Z" fill="#aaaaaa"/></svg>
<div class="t" style="left:1702px;top:31px;height:20px;line-height:20px;">View</div>
<div class="t" style="left:1746px;top:31px;height:20px;line-height:20px;">Search</div>
<div class="menu" style="left:1793px;top:30px;width:112px;height:20px;border-radius:4px 0 0 4px"></div>
<div class="t w" style="left:1801px;top:31px;height:20px;line-height:20px;">All Scenes</div>
<svg style="left:1889px;top:28px" width="13" height="13"><path d="M1 0 L13 12 M5 0 L13 8 M9 0 L13 4" stroke="#ddd" stroke-width="0.9"/><path d="M2 0 L13 11 M6 0 L13 7" stroke="#111" stroke-width="0.7"/></svg>
<div style="left:1651px;top:53px;width:251px;height:139px;background:#727272"></div>
<div style="left:1651px;top:53px;width:251px;height:1px;background:#5a5a5a"></div>
<div style="left:1651px;top:94px;width:251px;height:20px;background:#6c6c6c"></div>
<div style="left:1651px;top:134px;width:251px;height:20px;background:#6c6c6c"></div>
<div style="left:1651px;top:54px;width:251px;height:20px;background:#6c6c6c"></div>
<div style="left:1651px;top:54px;width:174px;height:20px;background:#7f8388"></div>
<div style="left:1825px;top:54px;width:1px;height:120px;background:#616161"></div>
<div style="left:1845px;top:54px;width:1px;height:120px;background:#616161"></div>
<div style="left:1865px;top:54px;width:1px;height:120px;background:#616161"></div>
<div style="left:1677px;top:70px;width:1px;height:104px;background:#3a3a3a"></div>
<div style="left:1663px;top:63px;width:14px;height:1px;background:#3a3a3a"></div>
<svg style="left:1653px;top:58px" width="11" height="11"><circle cx="5.5" cy="5.5" r="4.5" fill="#ddd" stroke="#222" stroke-width="1"/><path d="M3 5.5 H8" stroke="#111" stroke-width="1.2"/></svg>
<div style="left:1677px;top:123px;width:14px;height:1px;background:#3a3a3a"></div>
<svg style="left:1673px;top:118px" width="11" height="11"><circle cx="5.5" cy="5.5" r="4.5" fill="#ddd" stroke="#222" stroke-width="1"/><path d="M3 5.5 H8 M5.5 3 V8" stroke="#111" stroke-width="1.2"/></svg>
<div style="left:1677px;top:143px;width:14px;height:1px;background:#3a3a3a"></div>
<svg style="left:1673px;top:138px" width="11" height="11"><circle cx="5.5" cy="5.5" r="4.5" fill="#ddd" stroke="#222" stroke-width="1"/><path d="M3 5.5 H8 M5.5 3 V8" stroke="#111" stroke-width="1.2"/></svg>
<div style="left:1677px;top:163px;width:14px;height:1px;background:#3a3a3a"></div>
<svg style="left:1673px;top:158px" width="11" height="11"><circle cx="5.5" cy="5.5" r="4.5" fill="#ddd" stroke="#222" stroke-width="1"/><path d="M3 5.5 H8 M5.5 3 V8" stroke="#111" stroke-width="1.2"/></svg>
<svg style="left:1678px;top:78px" width="11" height="11"><circle cx="5.5" cy="5.5" r="4.5" fill="#ddd" stroke="#222" stroke-width="1"/><path d="M3 5.5 H8 M5.5 3 V8" stroke="#111" stroke-width="1.2"/></svg>
<div class="t" style="left:1692px;top:56px;height:18px;line-height:18px;">Scene</div>
<svg style="left:1672px;top:55px" width="16" height="16"><circle cx="8" cy="8" r="8" fill="#9a9ea2"/><rect x="8" y="2.5" width="5" height="9" rx="2.5" fill="#4d7fd0" stroke="#1a2a50" stroke-width="0.8"/><circle cx="5.5" cy="11" r="3.2" fill="#ddd" stroke="#111" stroke-width="0.8"/><circle cx="4" cy="3" r="1.6" fill="#e8e060"/></svg>
<div class="t" style="left:1711px;top:76px;height:18px;line-height:18px;">RenderLayers</div>
<svg style="left:1692px;top:76px" width="16" height="16"><rect x="3" y="3" width="11" height="11" fill="#d8d0b0" stroke="#222" stroke-width="0.8"/><rect x="1" y="1" width="11" height="11" fill="#f0f0f0" stroke="#222" stroke-width="0.8"/><rect x="5" y="3" width="4" height="6" fill="#3a70c0"/></svg>
<div style="left:1788px;top:77px;width:1px;height:12px;background:#333"></div>
<svg style="left:1798px;top:75px" width="18" height="18"><circle cx="9" cy="9" r="9" fill="#9a9a9a"/><rect x="4" y="4" width="11" height="11" fill="#d8d0b0" stroke="#222" stroke-width="0.8"/><rect x="2" y="2" width="11" height="11" fill="#f0f0f0" stroke="#222" stroke-width="0.8"/><rect x="6" y="4" width="4" height="6" fill="#3a70c0"/></svg>
<div class="t" style="left:1711px;top:96px;height:18px;line-height:18px;">World</div>
<svg style="left:1690px;top:95px" width="18" height="18"><circle cx="9" cy="9" r="8.5" fill="#8c9aa8"/><circle cx="9" cy="9" r="6.5" fill="#3a6fb0" stroke="#111" stroke-width="0.8"/><path d="M5 6 Q8 4 9 7 Q7 10 10 12 Q6 13 5 9Z" fill="#60a040"/></svg>
<div class="t" style="left:1711px;top:116px;height:18px;line-height:18px;">Camera</div>
<div class="t" style="left:1711px;top:136px;height:18px;line-height:18px;">Lamp</div>
<div class="t" style="left:1711px;top:156px;height:18px;line-height:18px;">Plane</div>
<svg style="left:1692px;top:116px" width="16" height="16"><circle cx="5" cy="5" r="3.5" fill="#f0a040" stroke="#402000" stroke-width="0.8"/><circle cx="11" cy="5" r="3.5" fill="#f0a040" stroke="#402000" stroke-width="0.8"/><rect x="2" y="8" width="11" height="6" fill="#f0a040" stroke="#402000" stroke-width="0.8"/></svg>
<div style="left:1760px;top:118px;width:1px;height:12px;background:#333"></div>
<svg style="left:1769px;top:115px" width="18" height="18"><circle cx="9" cy="9" r="9" fill="#8e8e8e"/><circle cx="6" cy="6" r="3" fill="#b0b0b0"/><circle cx="12" cy="6" r="3" fill="#b0b0b0"/><rect x="4" y="9" width="9" height="5" fill="#b0b0b0"/></svg>
<svg style="left:1829px;top:117px" width="14" height="12"><path d="M1 6 Q7 0 13 6 Q7 12 1 6Z" fill="#eee" stroke="#222" stroke-width="0.8"/><circle cx="7" cy="6" r="2.2" fill="#111"/></svg>
<svg style="left:1851px;top:116px" width="12" height="14"><path d="M2 1 L10 8 L6 8 L8 13 L6 13.5 L4.5 9 L2 11Z" fill="#eee" stroke="#111" stroke-width="0.8"/></svg>
<svg style="left:1868px;top:116px" width="14" height="14"><rect x="1" y="4" width="12" height="9" rx="1" fill="#e8e8e8" stroke="#111" stroke-width="1"/><rect x="2" y="2.5" width="3.5" height="2" fill="#e8e8e8" stroke="#111" stroke-width="0.7"/><circle cx="7.5" cy="8.5" r="3" fill="#333" stroke="#111" stroke-width="0.6"/><circle cx="7.5" cy="8.5" r="1.6" fill="#5a6a9a"/><circle cx="3" cy="6" r="0.8" fill="#d03030"/></svg>
<svg style="left:1692px;top:136px" width="16" height="16"><circle cx="8" cy="6" r="4.5" fill="#f0c060" stroke="#402000" stroke-width="0.8"/><rect x="6" y="10" width="4" height="5" fill="#e0a040" stroke="#402000" stroke-width="0.8"/></svg>
<div style="left:1748px;top:138px;width:1px;height:12px;background:#333"></div>
<svg style="left:1759px;top:136px" width="16" height="16"><path d="M2 2 L5 2 M2 2 V5 M14 2 H11 M14 2 V5 M2 14 H5 M2 14 V11 M14 14 H11 M14 14 V11" stroke="#a0a080" stroke-width="1"/><circle cx="8" cy="8" r="2.5" fill="#c8c8a0"/></svg>
<svg style="left:1829px;top:137px" width="14" height="12"><path d="M1 6 Q7 0 13 6 Q7 12 1 6Z" fill="#eee" stroke="#222" stroke-width="0.8"/><circle cx="7" cy="6" r="2.2" fill="#111"/></svg>
<svg style="left:1851px;top:136px" width="12" height="14"><path d="M2 1 L10 8 L6 8 L8 13 L6 13.5 L4.5 9 L2 11Z" fill="#eee" stroke="#111" stroke-width="0.8"/></svg>
<svg style="left:1868px;top:136px" width="14" height="14"><rect x="1" y="4" width="12" height="9" rx="1" fill="#e8e8e8" stroke="#111" stroke-width="1"/><rect x="2" y="2.5" width="3.5" height="2" fill="#e8e8e8" stroke="#111" stroke-width="0.7"/><circle cx="7.5" cy="8.5" r="3" fill="#333" stroke="#111" stroke-width="0.6"/><circle cx="7.5" cy="8.5" r="1.6" fill="#5a6a9a"/><circle cx="3" cy="6" r="0.8" fill="#d03030"/></svg>
<svg style="left:1692px;top:156px" width="16" height="16"><path d="M2 3 H14 L8 14Z" fill="none" stroke="#f09030" stroke-width="2"/><path d="M2 3 H14 L8 14Z" fill="none" stroke="#402000" stroke-width="0.5"/></svg>
<div style="left:1748px;top:158px;width:1px;height:12px;background:#333"></div>
<svg style="left:1759px;top:156px" width="16" height="16"><path d="M3 3 H13 L8 13Z" fill="none" stroke="#9a9a9a" stroke-width="1"/></svg>
<svg style="left:1829px;top:157px" width="14" height="12"><path d="M1 6 Q7 0 13 6 Q7 12 1 6Z" fill="#eee" stroke="#222" stroke-width="0.8"/><circle cx="7" cy="6" r="2.2" fill="#111"/></svg>
<svg style="left:1851px;top:156px" width="12" height="14"><path d="M2 1 L10 8 L6 8 L8 13 L6 13.5 L4.5 9 L2 11Z" fill="#eee" stroke="#111" stroke-width="0.8"/></svg>
<svg style="left:1868px;top:156px" width="14" height="14"><rect x="1" y="4" width="12" height="9" rx="1" fill="#e8e8e8" stroke="#111" stroke-width="1"/><rect x="2" y="2.5" width="3.5" height="2" fill="#e8e8e8" stroke="#111" stroke-width="0.7"/><circle cx="7.5" cy="8.5" r="3" fill="#333" stroke="#111" stroke-width="0.6"/><circle cx="7.5" cy="8.5" r="1.6" fill="#5a6a9a"/><circle cx="3" cy="6" r="0.8" fill="#d03030"/></svg>
<div style="left:1885px;top:57px;width:12px;height:115px;background:#5f5f5f;border-radius:6px"></div>
<div style="left:1886px;top:58px;width:10px;height:10px;background:#a0a0a0;border-radius:5px"></div>
<div style="left:1655px;top:175px;width:222px;height:12px;background:#5f5f5f;border-radius:6px"></div>
<div style="left:1656px;top:176px;width:174px;height:10px;background:linear-gradient(#a8a8a8,#8c8c8c);border-radius:5px"></div>
<div style="left:1651px;top:188px;width:251px;height:1px;background:#8a8a8a"></div>
<div style="left:1651px;top:192px;width:251px;height:1px;background:#000"></div>
<div style="left:1651px;top:193px;width:251px;height:790px;background:#727272"></div>
<div style="left:1651px;top:193px;width:251px;height:25px;background:#686868"></div>
<div style="left:1651px;top:193px;width:251px;height:1px;background:#8a8a8a"></div>
<div style="left:1651px;top:218px;width:251px;height:1px;background:#5a5a5a"></div>
<div style="left:1651px;top:219px;width:251px;height:1px;background:#8a8a8a"></div>
<div class="menu" style="left:1659px;top:196px;width:30px;height:20px;border-radius:4px"></div>
<svg style="left:1889px;top:194px" width="13" height="13"><path d="M1 0 L13 12 M5 0 L13 8 M9 0 L13 4" stroke="#ddd" stroke-width="0.9"/><path d="M2 0 L13 11 M6 0 L13 7" stroke="#111" stroke-width="0.7"/></svg>
<svg style="left:1651px;top:179px" width="13" height="13"><path d="M0 1 L12 13 M0 5 L8 13 M0 9 L4 13" stroke="#ddd" stroke-width="0.9"/><path d="M0 2 L11 13 M0 6 L7 13" stroke="#111" stroke-width="0.7"/></svg>
<svg style="left:1662px;top:198px" width="16" height="16"><rect x="1" y="3" width="12" height="4" rx="1" fill="#eee" stroke="#222" stroke-width="0.7"/><rect x="1" y="9" width="12" height="4" rx="1" fill="#eee" stroke="#222" stroke-width="0.7"/></svg>
<svg style="left:1679px;top:199px" width="8" height="14"><path d="M1 6 L4 1 L7 6Z M1 8 L4 13 L7 8Z" fill="#aaaaaa"/></svg>
<div class="menu" style="left:1697px;top:196px;width:100px;height:20px;border-radius:4px"></div>
<div style="left:1717px;top:196px;width:1px;height:20px;background:#1e1e1e"></div>
<div style="left:1737px;top:196px;width:1px;height:20px;background:#1e1e1e"></div>
<div style="left:1737px;top:196px;width:20px;height:20px;background:linear-gradient(#4a72b8,#628ed4);border:1px solid #1e1e1e"></div>
<div style="left:1757px;top:196px;width:1px;height:20px;background:#1e1e1e"></div>
<div style="left:1777px;top:196px;width:1px;height:20px;background:#1e1e1e"></div>
<svg style="left:1699px;top:198px" width="16" height="16"><rect x="1" y="5" width="13" height="9" fill="#444" stroke="#111"/><circle cx="7.5" cy="9.5" r="3" fill="#888" stroke="#ccc"/><rect x="3" y="3" width="4" height="2" fill="#aaa"/></svg>
<svg style="left:1719px;top:198px" width="16" height="16"><rect x="3" y="3" width="11" height="11" fill="#d8d0b0" stroke="#222" stroke-width="0.8"/><rect x="1" y="1" width="11" height="11" fill="#f0f0f0" stroke="#222" stroke-width="0.8"/><rect x="5" y="3" width="4" height="6" fill="#3a70c0"/></svg>
<svg style="left:1739px;top:198px" width="16" height="16"><rect x="8" y="2.5" width="5" height="9" rx="2.5" fill="#4d7fd0" stroke="#1a2a50" stroke-width="0.8"/><circle cx="5.5" cy="11" r="3.2" fill="#ddd" stroke="#111" stroke-width="0.8"/><circle cx="4" cy="3" r="1.6" fill="#e8e060"/></svg>
<svg style="left:1759px;top:198px" width="16" height="16"><circle cx="8" cy="8" r="6.5" fill="#3a6fb0" stroke="#111" stroke-width="0.8"/><path d="M4 6 Q7 4 8 7 Q6 10 9 12 Q5 13 4 9Z" fill="#60a040"/></svg>
<svg style="left:1779px;top:198px" width="16" height="16"><rect x="2" y="2" width="12" height="12" fill="#c4c4c4" stroke="#333" stroke-width="0.6"/><path d="M2 2h3v3h-3zM8 2h3v3h-3zM5 5h3v3h-3zM11 5h3v3h-3zM2 8h3v3h-3zM8 8h3v3h-3zM5 11h3v3h-3zM11 11h3v3h-3z" fill="#7a2222"/></svg>
<svg style="left:1659px;top:229px" width="16" height="16"><path d="M9 1 L15 7 L12 8 L9 11 L9 13 L3 7 L5 7 L8 4Z" fill="#ddd" stroke="#222" stroke-width="0.8"/><path d="M5 11 L1 15" stroke="#222" stroke-width="1.2"/></svg>
<svg style="left:1682px;top:229px" width="16" height="16"><rect x="8" y="2.5" width="5" height="9" rx="2.5" fill="#4d7fd0" stroke="#1a2a50" stroke-width="0.8"/><circle cx="5.5" cy="11" r="3.2" fill="#ddd" stroke="#111" stroke-width="0.8"/><circle cx="4" cy="3" r="1.6" fill="#e8e060"/></svg>
<div class="t" style="left:1703px;top:229px;height:18px;line-height:18px;">Scene</div>
<div style="left:1655px;top:254px;width:241px;height:1px;background:#4e4e4e"></div>
<div style="left:1655px;top:255px;width:241px;height:1px;background:#8e8e8e"></div>
<svg style="left:1663px;top:263px" width="9" height="9"><path d="M0 0 H8.5 L4.25 8.5Z" fill="#222"/></svg>
<div class="t ptitle" style="left:1675px;top:258px;height:18px;line-height:18px;">Scene</div>
<svg style="left:1880px;top:267px" width="12" height="6"><rect x="0" y="0" width="1" height="1" fill="#d4d4d4"/><rect x="0" y="3" width="1" height="1" fill="#d4d4d4"/><rect x="3" y="0" width="1" height="1" fill="#d4d4d4"/><rect x="3" y="3" width="1" height="1" fill="#d4d4d4"/><rect x="6" y="0" width="1" height="1" fill="#d4d4d4"/><rect x="6" y="3" width="1" height="1" fill="#d4d4d4"/><rect x="9" y="0" width="1" height="1" fill="#d4d4d4"/><rect x="9" y="3" width="1" height="1" fill="#d4d4d4"/></svg>
<div class="t" style="left:1665px;top:289px;height:18px;line-height:18px;">Camera:</div>
<div class="t" style="left:1665px;top:314px;height:18px;line-height:18px;">Background:</div>
<div class="t" style="left:1665px;top:339px;height:18px;line-height:18px;">Active Clip:</div>
<div class="tfield" style="left:1741px;top:287px;width:153px;height:20px;border-radius:4px"></div>
<svg style="left:1745px;top:289px" width="16" height="16"><path d="M8 1.5 L14 4.5 L14 11.5 L8 14.5 L2 11.5 L2 4.5 Z" fill="#e8a050" stroke="#3a2000" stroke-width="0.9"/><path d="M2 4.5 L8 1.5 L14 4.5 L8 7.5Z" fill="#f8cf90"/><path d="M8 7.5 V14.5" stroke="#6a3a00" stroke-width="0.8"/></svg>
<div class="t" style="left:1765px;top:289px;height:18px;line-height:18px;">Camera</div>
<svg style="left:1877px;top:290px" width="14" height="14"><path d="M2.5 2.5 L11.5 11.5 M11.5 2.5 L2.5 11.5" stroke="#222" stroke-width="3.6" stroke-linecap="square"/><path d="M2.5 2.5 L11.5 11.5 M11.5 2.5 L2.5 11.5" stroke="#fff" stroke-width="1.8"/></svg>
<div class="tfield" style="left:1741px;top:312px;width:153px;height:20px;border-radius:4px"></div>
<svg style="left:1745px;top:314px" width="16" height="16"><rect x="8" y="2.5" width="5" height="9" rx="2.5" fill="#4d7fd0" stroke="#1a2a50" stroke-width="0.8"/><circle cx="5.5" cy="11" r="3.2" fill="#ddd" stroke="#111" stroke-width="0.8"/><circle cx="4" cy="3" r="1.6" fill="#e8e060"/></svg>
<div class="tfield" style="left:1741px;top:337px;width:153px;height:20px;border-radius:4px"></div>
<svg style="left:1745px;top:339px" width="16" height="16"><rect x="1" y="7" width="9" height="8" fill="#ddd" stroke="#1a2a50" stroke-width="0.8"/><rect x="5" y="1" width="9" height="9" fill="#4d7fd0" stroke="#1a2a50" stroke-width="0.8"/></svg>
<div style="left:1655px;top:364px;width:241px;height:1px;background:#4e4e4e"></div>
<div style="left:1655px;top:365px;width:241px;height:1px;background:#8e8e8e"></div>
<svg style="left:1663px;top:373px" width="9" height="9"><path d="M0 0 H8.5 L4.25 8.5Z" fill="#222"/></svg>
<div class="t ptitle" style="left:1675px;top:368px;height:18px;line-height:18px;">Units</div>
<svg style="left:1880px;top:377px" width="12" height="6"><rect x="0" y="0" width="1" height="1" fill="#d4d4d4"/><rect x="0" y="3" width="1" height="1" fill="#d4d4d4"/><rect x="3" y="0" width="1" height="1" fill="#d4d4d4"/><rect x="3" y="3" width="1" height="1" fill="#d4d4d4"/><rect x="6" y="0" width="1" height="1" fill="#d4d4d4"/><rect x="6" y="3" width="1" height="1" fill="#d4d4d4"/><rect x="9" y="0" width="1" height="1" fill="#d4d4d4"/><rect x="9" y="3" width="1" height="1" fill="#d4d4d4"/></svg>
<div class="radio" style="left:1658px;top:397px;width:236px;height:20px;border-radius:4px"></div>
<div class="rsel" style="left:1658px;top:397px;width:78px;height:20px;border-radius:4px 0 0 4px"></div>
<div style="left:1735px;top:397px;width:1px;height:20px;background:#1e1e1e"></div>
<div style="left:1813px;top:397px;width:1px;height:20px;background:#1e1e1e"></div>
<div class="t c" style="left:1658px;top:398px;width:78px;height:20px;line-height:20px;">None</div>
<div class="t c w" style="left:1736px;top:398px;width:77px;height:20px;line-height:20px;">Metric</div>
<div class="t c w" style="left:1814px;top:398px;width:79px;height:20px;line-height:20px;">Imperial</div>
<div class="radio" style="left:1658px;top:419px;width:236px;height:20px;border-radius:4px"></div>
<div class="rsel" style="left:1658px;top:419px;width:118px;height:20px;border-radius:4px 0 0 4px"></div>
<div class="t c" style="left:1658px;top:420px;width:118px;height:20px;line-height:20px;">Degrees</div>
<div class="t c w" style="left:1776px;top:420px;width:118px;height:20px;line-height:20px;">Radians</div>
<div style="left:1655px;top:446px;width:241px;height:1px;background:#4e4e4e"></div>
<div style="left:1655px;top:447px;width:241px;height:1px;background:#8e8e8e"></div>
<svg style="left:1663px;top:455px" width="9" height="9"><path d="M0 0 H8.5 L4.25 8.5Z" fill="#222"/></svg>
<div class="t ptitle" style="left:1675px;top:450px;height:18px;line-height:18px;">Keying Sets</div>
<svg style="left:1880px;top:459px" width="12" height="6"><rect x="0" y="0" width="1" height="1" fill="#d4d4d4"/><rect x="0" y="3" width="1" height="1" fill="#d4d4d4"/><rect x="3" y="0" width="1" height="1" fill="#d4d4d4"/><rect x="3" y="3" width="1" height="1" fill="#d4d4d4"/><rect x="6" y="0" width="1" height="1" fill="#d4d4d4"/><rect x="6" y="3" width="1" height="1" fill="#d4d4d4"/><rect x="9" y="0" width="1" height="1" fill="#d4d4d4"/><rect x="9" y="3" width="1" height="1" fill="#d4d4d4"/></svg>
<div style="left:1658px;top:479px;width:207px;height:43px;background:#7f7f7f;border:1px solid #333;border-radius:4px"></div>
<svg style="left:1667px;top:507px" width="10" height="10"><circle cx="5" cy="5" r="3.8" fill="#8a8a8a" stroke="#444" stroke-width="0.8"/><path d="M2.8 5 H7.2 M5 2.8 V7.2" stroke="#333" stroke-width="0.9"/></svg>
<div style="left:1764px;top:509px;width:14px;height:1px;background:#1a1a1a"></div>
<div style="left:1764px;top:510px;width:14px;height:1px;background:#aaaaaa"></div>
<div style="left:1764px;top:512px;width:14px;height:1px;background:#1a1a1a"></div>
<div style="left:1764px;top:513px;width:14px;height:1px;background:#aaaaaa"></div>
<div style="left:1874px;top:479px;width:20px;height:40px;background:linear-gradient(#8c8c8c,#727272 50%,#6e6e6e);border:1px solid #333;border-radius:5px"></div>
<div style="left:1874px;top:498px;width:20px;height:1px;background:#333"></div>
<svg style="left:1877px;top:482px" width="14" height="14"><path d="M7 2 V12 M2 7 H12" stroke="#111" stroke-width="3.6"/><path d="M7 2.5 V11.5 M2.5 7 H11.5" stroke="#fff" stroke-width="1.8"/></svg>
<svg style="left:1877px;top:502px" width="14" height="14"><path d="M2.5 7 H11.5" stroke="#555" stroke-width="3.2"/><path d="M3 7 H11" stroke="#9a9a9a" stroke-width="1.5"/></svg>
<div style="left:1655px;top:529px;width:241px;height:1px;background:#4e4e4e"></div>
<div style="left:1655px;top:530px;width:241px;height:1px;background:#8e8e8e"></div>
<svg style="left:1664px;top:537px" width="9" height="9"><path d="M0 0 V8.5 L8.5 4.25Z" fill="#222"/></svg>
<div class="t ptitle" style="left:1675px;top:533px;height:18px;line-height:18px;">Color Management</div>
<svg style="left:1880px;top:542px" width="12" height="6"><rect x="0" y="0" width="1" height="1" fill="#d4d4d4"/><rect x="0" y="3" width="1" height="1" fill="#d4d4d4"/><rect x="3" y="0" width="1" height="1" fill="#d4d4d4"/><rect x="3" y="3" width="1" height="1" fill="#d4d4d4"/><rect x="6" y="0" width="1" height="1" fill="#d4d4d4"/><rect x="6" y="3" width="1" height="1" fill="#d4d4d4"/><rect x="9" y="0" width="1" height="1" fill="#d4d4d4"/><rect x="9" y="3" width="1" height="1" fill="#d4d4d4"/></svg>
<div style="left:1655px;top:553px;width:241px;height:1px;background:#4e4e4e"></div>
<div style="left:1655px;top:554px;width:241px;height:1px;background:#8e8e8e"></div>
<svg style="left:1664px;top:561px" width="9" height="9"><path d="M0 0 V8.5 L8.5 4.25Z" fill="#222"/></svg>
<div class="t ptitle" style="left:1675px;top:557px;height:18px;line-height:18px;">Audio</div>
<svg style="left:1880px;top:566px" width="12" height="6"><rect x="0" y="0" width="1" height="1" fill="#d4d4d4"/><rect x="0" y="3" width="1" height="1" fill="#d4d4d4"/><rect x="3" y="0" width="1" height="1" fill="#d4d4d4"/><rect x="3" y="3" width="1" height="1" fill="#d4d4d4"/><rect x="6" y="0" width="1" height="1" fill="#d4d4d4"/><rect x="6" y="3" width="1" height="1" fill="#d4d4d4"/><rect x="9" y="0" width="1" height="1" fill="#d4d4d4"/><rect x="9" y="3" width="1" height="1" fill="#d4d4d4"/></svg>
<div style="left:1655px;top:577px;width:241px;height:1px;background:#4e4e4e"></div>
<div style="left:1655px;top:578px;width:241px;height:1px;background:#8e8e8e"></div>
<svg style="left:1663px;top:586px" width="9" height="9"><path d="M0 0 H8.5 L4.25 8.5Z" fill="#222"/></svg>
<div class="chk" style="left:1675px;top:584px;width:14px;height:14px;"></div>
<svg style="left:1676px;top:584px" width="13" height="13"><path d="M2.5 6.5 L5.5 10 L11 2.5" stroke="#fff" stroke-width="1.6" fill="none"/></svg>
<div class="t ptitle" style="left:1695px;top:581px;height:18px;line-height:18px;">Gravity</div>
<svg style="left:1880px;top:590px" width="12" height="6"><rect x="0" y="0" width="1" height="1" fill="#d4d4d4"/><rect x="0" y="3" width="1" height="1" fill="#d4d4d4"/><rect x="3" y="0" width="1" height="1" fill="#d4d4d4"/><rect x="3" y="3" width="1" height="1" fill="#d4d4d4"/><rect x="6" y="0" width="1" height="1" fill="#d4d4d4"/><rect x="6" y="3" width="1" height="1" fill="#d4d4d4"/><rect x="9" y="0" width="1" height="1" fill="#d4d4d4"/><rect x="9" y="3" width="1" height="1" fill="#d4d4d4"/></svg>
<div class="num" style="left:1658px;top:610px;width:236px;height:20px;border-radius:10px"></div>
<div style="left:1736px;top:610px;width:1px;height:20px;background:#2a2a2a"></div>
<div style="left:1815px;top:610px;width:1px;height:20px;background:#2a2a2a"></div>
<svg style="left:1663px;top:616px" width="6" height="8"><path d="M5 0 L1 4 L5 8Z" fill="#777"/></svg>
<svg style="left:1726px;top:616px" width="6" height="8"><path d="M1 0 L5 4 L1 8Z" fill="#777"/></svg>
<div class="t" style="left:1672px;top:611px;height:20px;line-height:20px;">X:</div>
<div class="t r" style="left:1683px;top:611px;width:37px;height:20px;line-height:20px;">0.00</div>
<svg style="left:1741px;top:616px" width="6" height="8"><path d="M5 0 L1 4 L5 8Z" fill="#777"/></svg>
<svg style="left:1805px;top:616px" width="6" height="8"><path d="M1 0 L5 4 L1 8Z" fill="#777"/></svg>
<div class="t" style="left:1750px;top:611px;height:20px;line-height:20px;">Y:</div>
<div class="t r" style="left:1762px;top:611px;width:37px;height:20px;line-height:20px;">0.00</div>
<svg style="left:1820px;top:616px" width="6" height="8"><path d="M5 0 L1 4 L5 8Z" fill="#777"/></svg>
<svg style="left:1884px;top:616px" width="6" height="8"><path d="M1 0 L5 4 L1 8Z" fill="#777"/></svg>
<div class="t" style="left:1829px;top:611px;height:20px;line-height:20px;">Z:</div>
<div class="t r" style="left:1841px;top:611px;width:37px;height:20px;line-height:20px;">-9.81</div>
<div style="left:1655px;top:637px;width:241px;height:1px;background:#4e4e4e"></div>
<div style="left:1655px;top:638px;width:241px;height:1px;background:#8e8e8e"></div>
<svg style="left:1663px;top:646px" width="9" height="9"><path d="M0 0 H8.5 L4.25 8.5Z" fill="#222"/></svg>
<div class="t ptitle" style="left:1675px;top:641px;height:18px;line-height:18px;">Rigid Body World</div>
<svg style="left:1880px;top:650px" width="12" height="6"><rect x="0" y="0" width="1" height="1" fill="#d4d4d4"/><rect x="0" y="3" width="1" height="1" fill="#d4d4d4"/><rect x="3" y="0" width="1" height="1" fill="#d4d4d4"/><rect x="3" y="3" width="1" height="1" fill="#d4d4d4"/><rect x="6" y="0" width="1" height="1" fill="#d4d4d4"/><rect x="6" y="3" width="1" height="1" fill="#d4d4d4"/><rect x="9" y="0" width="1" height="1" fill="#d4d4d4"/><rect x="9" y="3" width="1" height="1" fill="#d4d4d4"/></svg>
<div class="tool" style="left:1658px;top:670px;width:236px;height:20px;border-radius:4px"></div>
<div class="t c" style="left:1658px;top:671px;width:236px;height:20px;line-height:20px;">Add Rigid Body World</div>
<div style="left:1655px;top:697px;width:241px;height:1px;background:#4e4e4e"></div>
<div style="left:1655px;top:698px;width:241px;height:1px;background:#8e8e8e"></div>
<svg style="left:1663px;top:706px" width="9" height="9"><path d="M0 0 H8.5 L4.25 8.5Z" fill="#222"/></svg>
<div class="chk" style="left:1675px;top:704px;width:14px;height:14px;"></div>
<div class="t ptitle" style="left:1695px;top:701px;height:18px;line-height:18px;">Simplify</div>
<svg style="left:1880px;top:710px" width="12" height="6"><rect x="0" y="0" width="1" height="1" fill="#d4d4d4"/><rect x="0" y="3" width="1" height="1" fill="#d4d4d4"/><rect x="3" y="0" width="1" height="1" fill="#d4d4d4"/><rect x="3" y="3" width="1" height="1" fill="#d4d4d4"/><rect x="6" y="0" width="1" height="1" fill="#d4d4d4"/><rect x="6" y="3" width="1" height="1" fill="#d4d4d4"/><rect x="9" y="0" width="1" height="1" fill="#d4d4d4"/><rect x="9" y="3" width="1" height="1" fill="#d4d4d4"/></svg>
<div class="t" style="left:1664px;top:733px;height:16px;line-height:16px;color:#4a4a4a">Viewport:</div>
<div class="t" style="left:1787px;top:733px;height:16px;line-height:16px;color:#4a4a4a">Render:</div>
<div class="num" style="left:1658px;top:752px;width:113px;height:20px;border-radius:10px;opacity:0.45"></div>
<svg style="left:1663px;top:758px" width="6" height="8"><path d="M5 0 L1 4 L5 8Z" fill="#777"/></svg>
<svg style="left:1761px;top:758px" width="6" height="8"><path d="M1 0 L5 4 L1 8Z" fill="#777"/></svg>
<div class="t" style="left:1672px;top:753px;height:20px;line-height:20px;color:#4a4a4a">Subdivision:</div>
<div class="t r" style="left:1723px;top:753px;width:33px;height:20px;line-height:20px;color:#4a4a4a">6</div>
<div class="num" style="left:1658px;top:774px;width:113px;height:20px;border-radius:10px;opacity:0.45"></div>
<div class="t c" style="left:1658px;top:775px;width:113px;height:20px;line-height:20px;color:#4a4a4a">Child Part: 1.000</div>
<div class="num" style="left:1780px;top:752px;width:114px;height:20px;border-radius:10px;opacity:0.45"></div>
<svg style="left:1785px;top:758px" width="6" height="8"><path d="M5 0 L1 4 L5 8Z" fill="#777"/></svg>
<svg style="left:1884px;top:758px" width="6" height="8"><path d="M1 0 L5 4 L1 8Z" fill="#777"/></svg>
<div class="t" style="left:1794px;top:753px;height:20px;line-height:20px;color:#4a4a4a">Subdivision:</div>
<div class="t r" style="left:1846px;top:753px;width:33px;height:20px;line-height:20px;color:#4a4a4a">6</div>
<div class="num" style="left:1780px;top:774px;width:114px;height:20px;border-radius:10px;opacity:0.45"></div>
<div class="t c" style="left:1780px;top:775px;width:114px;height:20px;line-height:20px;color:#4a4a4a">Child Part: 1.000</div>
<div class="num" style="left:1780px;top:796px;width:114px;height:20px;border-radius:10px;opacity:0.45"></div>
<svg style="left:1785px;top:802px" width="6" height="8"><path d="M5 0 L1 4 L5 8Z" fill="#777"/></svg>
<svg style="left:1884px;top:802px" width="6" height="8"><path d="M1 0 L5 4 L1 8Z" fill="#777"/></svg>
<div class="t" style="left:1794px;top:797px;height:20px;line-height:20px;color:#4a4a4a">Shadow Sam:</div>
<div class="t r" style="left:1846px;top:797px;width:33px;height:20px;line-height:20px;color:#4a4a4a">16</div>
<div class="num" style="left:1780px;top:818px;width:114px;height:20px;border-radius:10px;opacity:0.45"></div>
<div class="t c" style="left:1780px;top:819px;width:114px;height:20px;line-height:20px;color:#4a4a4a">AO and S: 1.000</div>
<div class="chk" style="left:1783px;top:843px;width:14px;height:14px;opacity:0.5"></div>
<div class="t" style="left:1804px;top:843px;height:16px;line-height:16px;color:#4a4a4a">Skip Quad to Tr...</div>
<div style="left:1655px;top:867px;width:241px;height:1px;background:#4e4e4e"></div>
<div style="left:1655px;top:868px;width:241px;height:1px;background:#8e8e8e"></div>
<svg style="left:1664px;top:875px" width="9" height="9"><path d="M0 0 V8.5 L8.5 4.25Z" fill="#222"/></svg>
<div class="t ptitle" style="left:1675px;top:871px;height:18px;line-height:18px;">Custom Properties</div>
<svg style="left:1880px;top:880px" width="12" height="6"><rect x="0" y="0" width="1" height="1" fill="#d4d4d4"/><rect x="0" y="3" width="1" height="1" fill="#d4d4d4"/><rect x="3" y="0" width="1" height="1" fill="#d4d4d4"/><rect x="3" y="3" width="1" height="1" fill="#d4d4d4"/><rect x="6" y="0" width="1" height="1" fill="#d4d4d4"/><rect x="6" y="3" width="1" height="1" fill="#d4d4d4"/><rect x="9" y="0" width="1" height="1" fill="#d4d4d4"/><rect x="9" y="3" width="1" height="1" fill="#d4d4d4"/></svg>
<svg style="left:1651px;top:970px" width="13" height="13"><path d="M0 1 L12 13 M0 5 L8 13 M0 9 L4 13" stroke="#ddd" stroke-width="0.9"/><path d="M0 2 L11 13 M0 6 L7 13" stroke="#111" stroke-width="0.7"/></svg></body></html>
